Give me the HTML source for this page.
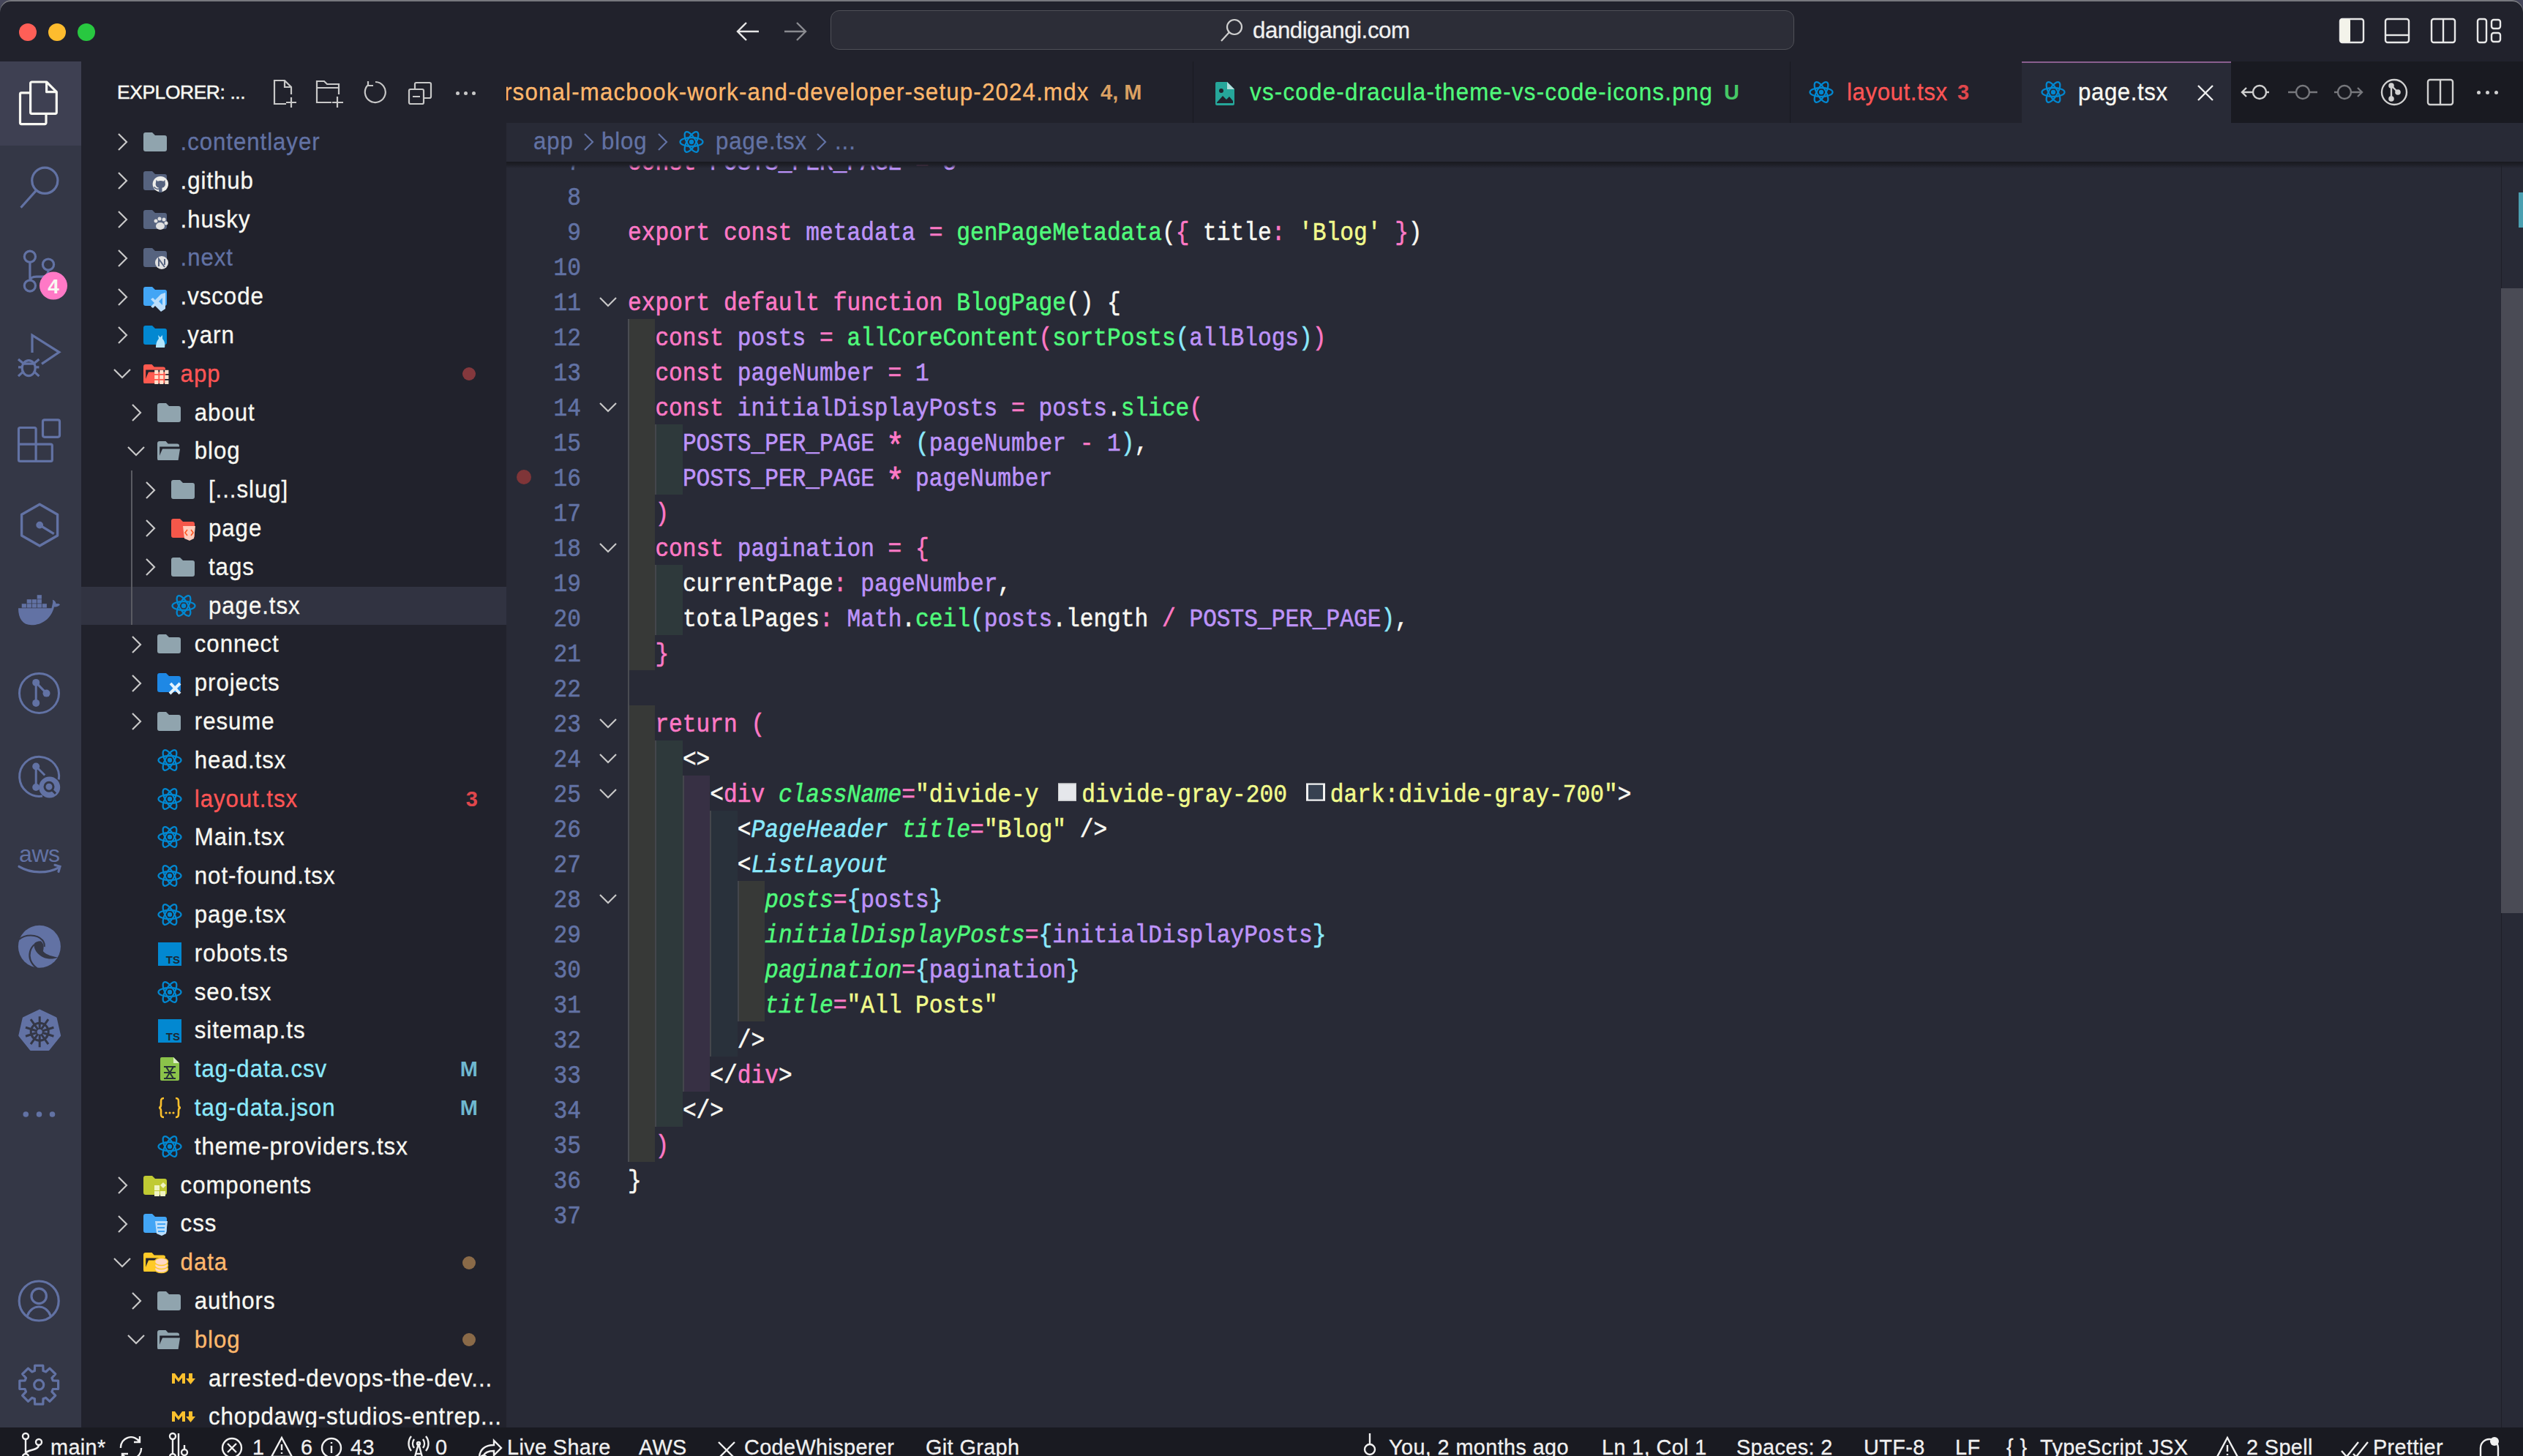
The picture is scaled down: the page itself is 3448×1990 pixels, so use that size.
<!DOCTYPE html>
<html><head><meta charset="utf-8"><style>
html,body{margin:0;padding:0;width:3448px;height:1990px;overflow:hidden;background:#21222c;font-family:"Liberation Sans",sans-serif}
div,span{box-sizing:content-box}
</style></head><body>
<div style="position:absolute;left:0;top:0;width:3448px;height:40px;background:#45465a"></div>
<div id="title" style="position:absolute;left:0;top:0;width:3448px;height:84px;background:#21222c;border-radius:15px 15px 0 0;box-shadow:inset 0 2px 0 #77787e"></div>
<div style="position:absolute;left:26px;top:32px;width:24px;height:24px;border-radius:50%;background:#ff5f57"></div>
<div style="position:absolute;left:66px;top:32px;width:24px;height:24px;border-radius:50%;background:#febc2e"></div>
<div style="position:absolute;left:106px;top:32px;width:24px;height:24px;border-radius:50%;background:#28c840"></div>
<svg style="position:absolute;left:1005px;top:28px" width="36" height="30" viewBox="0 0 36 30"><path d="M32 15H4M15 3L3 15l12 12" fill="none" stroke="#e6e6e6" stroke-width="2.4"/></svg>
<svg style="position:absolute;left:1068px;top:28px" width="36" height="30" viewBox="0 0 36 30"><path d="M4 15h28M21 3l12 12-12 12" fill="none" stroke="#8a8b90" stroke-width="2.4"/></svg>
<div style="position:absolute;left:1135px;top:14px;width:1317px;height:54px;border:1.5px solid #505158;border-radius:12px;background:#2c2d37;box-sizing:border-box"></div>
<svg style="position:absolute;left:1666px;top:24px" width="36" height="36" viewBox="0 0 36 36"><circle cx="21" cy="13" r="10" fill="none" stroke="#cfcfcf" stroke-width="2.2"/><path d="M14 20L3 32" stroke="#cfcfcf" stroke-width="2.2"/></svg>
<div style="position:absolute;left:1712px;top:22px;height:40px;line-height:40px;font-size:31.2px;letter-spacing:-0.4px;color:#f0f0f0;-webkit-text-stroke:0.3px #f0f0f0">dandigangi.com</div>
<svg style="position:absolute;left:3196px;top:24px" width="36" height="36" viewBox="0 0 36 36"><rect x="2" y="2" width="32" height="32" rx="3" fill="none" stroke="#e8e8e8" stroke-width="2.4"/><rect x="2" y="2" width="14" height="32" rx="2" fill="#f3f3ea"/></svg>
<svg style="position:absolute;left:3258px;top:24px" width="36" height="36" viewBox="0 0 36 36"><rect x="2" y="2" width="32" height="32" rx="3" fill="none" stroke="#e8e8e8" stroke-width="2.4"/><path d="M2 24h32" stroke="#e8e8e8" stroke-width="2.4"/></svg>
<svg style="position:absolute;left:3321px;top:24px" width="36" height="36" viewBox="0 0 36 36"><rect x="2" y="2" width="32" height="32" rx="3" fill="none" stroke="#e8e8e8" stroke-width="2.4"/><path d="M18 2v32" stroke="#e8e8e8" stroke-width="2.4"/></svg>
<svg style="position:absolute;left:3384px;top:24px" width="36" height="36" viewBox="0 0 36 36"><rect x="2" y="2" width="12" height="32" rx="3" fill="none" stroke="#e8e8e8" stroke-width="2.4"/><rect x="21" y="3" width="12" height="12" rx="3" fill="none" stroke="#e8e8e8" stroke-width="2.4"/><rect x="21" y="21" width="12" height="12" rx="3" fill="none" stroke="#e8e8e8" stroke-width="2.4"/></svg>
<div style="position:absolute;left:0;top:84px;width:111px;height:1867px;background:#343746"></div>
<div style="position:absolute;left:0;top:84px;width:111px;height:115px;background:#3e4052"></div>
<svg style="position:absolute;left:0;top:0" width="111" height="1990" viewBox="0 0 111 1990"><g transform="translate(0 84.0)" fill="none" stroke="#f8f8f2" stroke-width="3.2" stroke-linejoin="round"><path d="M41.6 42.8H29.3a1.8 1.8 0 0 0-1.8 1.8v39.2a1.8 1.8 0 0 0 1.8 1.8h31.9a1.8 1.8 0 0 0 1.8-1.8V71.3"/><path d="M41.6 29.8a1.8 1.8 0 0 1 1.8-1.8h20.2l13.7 13.7v27.8a1.8 1.8 0 0 1-1.8 1.8H43.4a1.8 1.8 0 0 1-1.8-1.8z"/><path d="M63.6 28v13.7h13.7" /></g><g transform="translate(0 199.2)" fill="none" stroke="#6272a4" stroke-width="3.2"><circle cx="61.3" cy="47.6" r="17.6"/><path d="M49.2 61.4L28.5 84.5"/></g><g transform="translate(0 314.4)" fill="none" stroke="#6272a4" stroke-width="3.2"><circle cx="40.9" cy="36.3" r="7.6"/><circle cx="66" cy="47.2" r="7.6"/><circle cx="40.9" cy="76.2" r="7.6"/><path d="M40.9 43.9v24.7M66 54.8c0 6-3 9-9 9h-7c-6 0-9 2-9 6"/></g><circle cx="73" cy="390.59999999999997" r="19" fill="#ff79c6"/><text x="73" y="400.9" text-anchor="middle" font-family="Liberation Sans" font-weight="bold" font-size="28" fill="#f8f8f2">4</text><g transform="translate(0 429.6)" fill="none" stroke="#6272a4" stroke-width="3.2"><path d="M44 52.5V28.5l36.8 23.3L57 67.7"/><ellipse cx="39.2" cy="73.5" rx="9" ry="10.5"/><path d="M30 67.5h18.4M25 61.3l6 5M25 72.3h5M25 84.5l6-5.5M53.4 61.3l-6 5M53.4 72.3h-5M53.4 84.5l-6-5.5"/></g><g transform="translate(0 544.8)" fill="none" stroke="#6272a4" stroke-width="3.2" stroke-linejoin="round"><rect x="58.5" y="29" width="23" height="23.5" rx="2.5"/><path d="M27.5 39.7h19.6a2 2 0 0 1 2 2v20.6h20.2a2 2 0 0 1 2 2v19.3a2 2 0 0 1-2 2H27.5a2 2 0 0 1-2-2V41.7a2 2 0 0 1 2-2zM25.5 62.3h23.6v23.3"/></g><g transform="translate(0 660.0)" fill="none" stroke="#6272a4" stroke-width="3.4" stroke-linejoin="round"><path d="M54.2 29.2l24.4 14v28.8l-24.4 14-24.6-14V43.2z"/><path d="M54.2 57.6l19.5 12"/><circle cx="54.2" cy="57.6" r="3.2" fill="#6272a4"/></g><g transform="translate(0 775.2)" fill="#6272a4"><path d="M25 56h45.5c1-5 2.5-9 1.2-11.5 3 .8 4.5 3 5 5.5 2-.6 4-.4 5.3 1.2-2 2.5-5 3-8 3C70 70 58 79 43 79 31 79 25 70 25 56z"/><rect x="29.7" y="50" width="6.2" height="5.4"/><rect x="36.7" y="50" width="6.2" height="5.4"/><rect x="43.7" y="50" width="6.2" height="5.4"/><rect x="50.7" y="50" width="6.2" height="5.4"/><rect x="57.7" y="50" width="6.2" height="5.4"/><rect x="36.7" y="44" width="6.2" height="5.4"/><rect x="43.7" y="44" width="6.2" height="5.4"/><rect x="50.7" y="44" width="6.2" height="5.4"/><rect x="50.7" y="38" width="6.2" height="5.4"/></g><g transform="translate(0 890.4)" fill="none" stroke="#6272a4" stroke-width="3"><circle cx="53.5" cy="57" r="27"/><path d="M49.2 42.5v28M49.2 42.5l14.3 14.7"/><g fill="#6272a4" stroke="none"><circle cx="49.2" cy="42.5" r="5"/><circle cx="49.2" cy="70.5" r="5"/><circle cx="63.5" cy="57.2" r="5"/></g></g><g transform="translate(0 1005.6)" fill="none" stroke="#6272a4" stroke-width="3"><path d="M58 82.4A27 27 0 1 1 80.3 60"/><path d="M49.2 41.9v28.5M49.2 41.9l12 12"/><g fill="#6272a4" stroke="none"><circle cx="49.2" cy="41.9" r="5"/><circle cx="49.2" cy="70.4" r="5"/><circle cx="67.7" cy="70.4" r="14.5"/></g><circle cx="67" cy="69.6" r="6" stroke="#343746" stroke-width="3"/><path d="M71 74l5 5" stroke="#343746" stroke-width="3"/></g><text x="53.8" y="1177.8" text-anchor="middle" font-family="Liberation Sans" font-size="32" fill="#6272a4" letter-spacing="-0.5">aws</text><g transform="translate(0 1120.8)" fill="none" stroke="#6272a4" stroke-width="3.2" stroke-linecap="round"><path d="M26 63.5c17 10 39 10 55 1"/><path d="M75 61.5l7 2-2 7"/></g><g transform="translate(0 1236.0)"><circle cx="53.9" cy="57.7" r="29" fill="#6272a4"/><g fill="none" stroke="#343746" stroke-width="2.2"><path d="M26 48C34 41 50 40 58 49c2.5 3 3 6 2.6 9"/><path d="M47 55c-6 5-8 14-5.5 21 2 5 5 8.5 9 11.5"/></g><path d="M55.7 50.3c3.6 2.4 5 7.2 3.2 13.6 2.3 3.5 9 6.5 20 8.6-3.7 1.8-8 2.4-12 2-7-.6-14-4.6-17.6-10.2-2.6-4-3.3-8.3-2.5-10.5 1.5-2.3 5-3.6 8.9-3.5z" fill="#343746"/></g><g transform="translate(0 1351.2)"><path d="M54.2 29.8l22 10.6 5.4 23.8-15.2 19H42l-15.2-19 5.4-23.8z" fill="#6272a4" stroke="#6272a4" stroke-width="3" stroke-linejoin="round"/><g fill="none" stroke="#343746" stroke-width="3"><circle cx="54.2" cy="59" r="12"/><path d="M54.2 38v42M35 53l38.4 12M35 65l38.4-12M42 42l24 34M66 42L42 76"/></g><circle cx="54.2" cy="59" r="3.5" fill="#6272a4"/></g><circle cx="35.3" cy="1523" r="3.8" fill="#6272a4"/><circle cx="53.5" cy="1523" r="3.8" fill="#6272a4"/><circle cx="71.5" cy="1523" r="3.8" fill="#6272a4"/><g fill="none" stroke="#6272a4" stroke-width="3.2"><circle cx="53.2" cy="1778" r="27"/><circle cx="53.2" cy="1771.4" r="10.2"/><path d="M37 1799c3-8 9-13 16.2-13s13.2 5 16.2 13"/></g><g fill="none" stroke="#6272a4" stroke-width="3.2" stroke-linejoin="round"><path d="M47.6 1866.3 L58.8 1866.3 L59.0 1873.6 L62.6 1875.0 L67.9 1870.1 L75.8 1878.0 L70.9 1883.3 L72.3 1886.9 L79.6 1887.1 L79.6 1898.3 L72.3 1898.5 L70.9 1902.1 L75.8 1907.4 L67.9 1915.3 L62.6 1910.4 L59.0 1911.8 L58.8 1919.1 L47.6 1919.1 L47.4 1911.8 L43.8 1910.4 L38.5 1915.3 L30.6 1907.4 L35.5 1902.1 L34.1 1898.5 L26.8 1898.3 L26.8 1887.1 L34.1 1886.9 L35.5 1883.3 L30.6 1878.0 L38.5 1870.1 L43.8 1875.0 L47.4 1873.6Z"/><circle cx="53.2" cy="1892.7" r="6.5"/></g></svg>
<div style="position:absolute;left:111px;top:84px;width:581px;height:1867px;background:#21222c;overflow:hidden" id="sb">
<div style="position:absolute;left:49px;top:22px;height:40px;line-height:40px;font-size:26.4px;letter-spacing:-0.4px;color:#f8f8f2;-webkit-text-stroke:0.5px #f8f8f2">EXPLORER: ...</div>
<svg style="position:absolute;left:260px;top:24px" width="40" height="40" viewBox="0 0 40 40" fill="none" stroke="#c8c8c8" stroke-width="2.2"><path d="M20 34H4V2h14l9 9v10M18 2v9h9M27 25v14M20 32h14"/></svg>
<svg style="position:absolute;left:320px;top:24px" width="40" height="40" viewBox="0 0 40 40" fill="none" stroke="#c8c8c8" stroke-width="2.2"><path d="M22 32H2V3h10l4 4h16v14M2 12h30M30 24v15M23 32h15"/></svg>
<svg style="position:absolute;left:384px;top:24px" width="36" height="38" viewBox="0 0 36 38" fill="none" stroke="#c8c8c8" stroke-width="2.2"><path d="M8 8a14 14 0 1 0 10-4M8 3v6h7"/></svg>
<svg style="position:absolute;left:446px;top:26px" width="36" height="36" viewBox="0 0 36 36" fill="none" stroke="#c8c8c8" stroke-width="2.2"><rect x="2" y="12" width="20" height="20" rx="2"/><path d="M10 12V5a2 2 0 0 1 2-2h18a2 2 0 0 1 2 2v17a2 2 0 0 1-2 2h-8M7 22h10"/></svg>
<div style="position:absolute;left:512px;top:41px;width:5px;height:5px;border-radius:50%;background:#c8c8c8"></div>
<div style="position:absolute;left:523px;top:41px;width:5px;height:5px;border-radius:50%;background:#c8c8c8"></div>
<div style="position:absolute;left:534px;top:41px;width:5px;height:5px;border-radius:50%;background:#c8c8c8"></div>
<svg style="position:absolute;left:49.0px;top:97.4px" width="16" height="26" viewBox="0 0 16 26"><path d="M2 2l11 11L2 24" fill="none" stroke="#c8c8c8" stroke-width="2.2"/></svg>
<div style="position:absolute;left:85.0px;top:96.9px;width:34px;height:34px"><svg width="34" height="28" viewBox="0 0 34 28" style="position:absolute;left:0;top:0;overflow:visible"><path d="M0 3a3 3 0 0 1 3-3h9l4 4h13a3 3 0 0 1 3 3v16a3 3 0 0 1-3 3H3a3 3 0 0 1-3-3z" fill="#90a4ae"/></svg></div>
<div style="position:absolute;left:135.6px;top:84.0px;height:52.8px;line-height:52.8px;font-size:31.2px;letter-spacing:0.95px;color:#6272a4;white-space:nowrap;transform:scaleY(1.07);-webkit-text-stroke:0.3px currentColor">.contentlayer</div>
<svg style="position:absolute;left:49.0px;top:150.20000000000002px" width="16" height="26" viewBox="0 0 16 26"><path d="M2 2l11 11L2 24" fill="none" stroke="#c8c8c8" stroke-width="2.2"/></svg>
<div style="position:absolute;left:85.0px;top:149.7px;width:34px;height:34px"><svg width="34" height="28" viewBox="0 0 34 28" style="position:absolute;left:0;top:0;overflow:visible"><path d="M0 3a3 3 0 0 1 3-3h9l4 4h13a3 3 0 0 1 3 3v16a3 3 0 0 1-3 3H3a3 3 0 0 1-3-3z" fill="#56637f"/><circle cx="23.3" cy="17.6" r="10.7" fill="#eeeeea"/><path d="M17.6 11.8l1.8 1.9q4.1-1.2 8.2 0l1.8-1.9.3 4.3q1.3 5.2-4.2 6.6V29h-4.4v-6.3q-5.5-1.4-4.2-6.6z" fill="#56637f"/><path d="M14.5 21.5q3 4 6.8 2.6" stroke="#56637f" stroke-width="1.6" fill="none"/></svg></div>
<div style="position:absolute;left:135.6px;top:136.8px;height:52.8px;line-height:52.8px;font-size:31.2px;letter-spacing:0.95px;color:#f8f8f2;white-space:nowrap;transform:scaleY(1.07);-webkit-text-stroke:0.3px currentColor">.github</div>
<svg style="position:absolute;left:49.0px;top:203.0px" width="16" height="26" viewBox="0 0 16 26"><path d="M2 2l11 11L2 24" fill="none" stroke="#c8c8c8" stroke-width="2.2"/></svg>
<div style="position:absolute;left:85.0px;top:202.5px;width:34px;height:34px"><svg width="34" height="28" viewBox="0 0 34 28" style="position:absolute;left:0;top:0;overflow:visible"><path d="M0 3a3 3 0 0 1 3-3h9l4 4h13a3 3 0 0 1 3 3v16a3 3 0 0 1-3 3H3a3 3 0 0 1-3-3z" fill="#56637f"/><g fill="#e0e0e0"><ellipse cx="23" cy="22" rx="6" ry="5"/><circle cx="17" cy="15" r="2.5"/><circle cx="22" cy="12" r="2.5"/><circle cx="28" cy="13" r="2.5"/><circle cx="31" cy="18" r="2.5"/></g></svg></div>
<div style="position:absolute;left:135.6px;top:189.6px;height:52.8px;line-height:52.8px;font-size:31.2px;letter-spacing:0.95px;color:#f8f8f2;white-space:nowrap;transform:scaleY(1.07);-webkit-text-stroke:0.3px currentColor">.husky</div>
<svg style="position:absolute;left:49.0px;top:255.79999999999995px" width="16" height="26" viewBox="0 0 16 26"><path d="M2 2l11 11L2 24" fill="none" stroke="#c8c8c8" stroke-width="2.2"/></svg>
<div style="position:absolute;left:85.0px;top:255.3px;width:34px;height:34px"><svg width="34" height="28" viewBox="0 0 34 28" style="position:absolute;left:0;top:0;overflow:visible"><path d="M0 3a3 3 0 0 1 3-3h9l4 4h13a3 3 0 0 1 3 3v16a3 3 0 0 1-3 3H3a3 3 0 0 1-3-3z" fill="#56637f"/><circle cx="25" cy="20" r="9" fill="#e0e0e0"/><path d="M21 25V15l8 11M29 15v8" stroke="#56637f" stroke-width="2" fill="none"/></svg></div>
<div style="position:absolute;left:135.6px;top:242.4px;height:52.8px;line-height:52.8px;font-size:31.2px;letter-spacing:0.95px;color:#6272a4;white-space:nowrap;transform:scaleY(1.07);-webkit-text-stroke:0.3px currentColor">.next</div>
<svg style="position:absolute;left:49.0px;top:308.59999999999997px" width="16" height="26" viewBox="0 0 16 26"><path d="M2 2l11 11L2 24" fill="none" stroke="#c8c8c8" stroke-width="2.2"/></svg>
<div style="position:absolute;left:85.0px;top:308.1px;width:34px;height:34px"><svg width="34" height="28" viewBox="0 0 34 28" style="position:absolute;left:0;top:0;overflow:visible"><path d="M0 3a3 3 0 0 1 3-3h9l4 4h13a3 3 0 0 1 3 3v16a3 3 0 0 1-3 3H3a3 3 0 0 1-3-3z" fill="#42a5f5"/><path d="M30 8v22l-6 4-8-8-3 3-3-2 5-5-5-5 3-2 3 3 8-8z" fill="#bbdefb"/><path d="M26 15v10l-5-5z" fill="#42a5f5"/></svg></div>
<div style="position:absolute;left:135.6px;top:295.2px;height:52.8px;line-height:52.8px;font-size:31.2px;letter-spacing:0.95px;color:#f8f8f2;white-space:nowrap;transform:scaleY(1.07);-webkit-text-stroke:0.3px currentColor">.vscode</div>
<svg style="position:absolute;left:49.0px;top:361.4px" width="16" height="26" viewBox="0 0 16 26"><path d="M2 2l11 11L2 24" fill="none" stroke="#c8c8c8" stroke-width="2.2"/></svg>
<div style="position:absolute;left:85.0px;top:360.9px;width:34px;height:34px"><svg width="34" height="28" viewBox="0 0 34 28" style="position:absolute;left:0;top:0;overflow:visible"><path d="M0 3a3 3 0 0 1 3-3h9l4 4h13a3 3 0 0 1 3 3v16a3 3 0 0 1-3 3H3a3 3 0 0 1-3-3z" fill="#0288d1"/><path d="M17 30c0-6 2-10 4-12l-1-5 3 3 3-3v5c3 3 4 8 3 12h4z" fill="#b3e5fc"/></svg></div>
<div style="position:absolute;left:135.6px;top:348.0px;height:52.8px;line-height:52.8px;font-size:31.2px;letter-spacing:0.95px;color:#f8f8f2;white-space:nowrap;transform:scaleY(1.07);-webkit-text-stroke:0.3px currentColor">.yarn</div>
<svg style="position:absolute;left:43.0px;top:419.19999999999993px" width="26" height="16" viewBox="0 0 26 16"><path d="M2 2l11 11L24 2" fill="none" stroke="#c8c8c8" stroke-width="2.2"/></svg>
<div style="position:absolute;left:85.0px;top:413.7px;width:34px;height:34px"><svg width="34" height="28" viewBox="0 0 34 28" style="position:absolute;left:0;top:0;overflow:visible"><path d="M0 3a3 3 0 0 1 3-3h8.5l3.2 3.4H27a3 3 0 0 1 3 3v1.1H3.2V26H2.5A2.5 2.5 0 0 1 0 23.5z" fill="#ff5a4f"/><path d="M7 10.5h24L28.6 26H0.4z" fill="#ff5a4f"/><rect x="13.8" y="6.4" width="22" height="22" fill="#21222c" opacity="0.0"/><g fill="#ffe0cc"><rect x="15.2" y="7.8" width="5.2" height="5.2"/><rect x="22.2" y="7.8" width="5.2" height="5.2"/><rect x="29.2" y="7.8" width="5.2" height="5.2"/><rect x="15.2" y="14.8" width="5.2" height="5.2"/><rect x="22.2" y="14.8" width="5.2" height="5.2"/><rect x="29.2" y="14.8" width="5.2" height="5.2"/><rect x="15.2" y="21.8" width="5.2" height="5.2"/><rect x="22.2" y="21.8" width="5.2" height="5.2"/><rect x="29.2" y="21.8" width="5.2" height="5.2"/></g></svg></div>
<div style="position:absolute;left:135.6px;top:400.8px;height:52.8px;line-height:52.8px;font-size:31.2px;letter-spacing:0.95px;color:#ff5555;white-space:nowrap;transform:scaleY(1.07);-webkit-text-stroke:0.3px currentColor">app</div>
<div style="position:absolute;left:521px;top:418.2px;width:18px;height:18px;border-radius:50%;background:#84383d"></div>
<svg style="position:absolute;left:68.19999999999999px;top:466.99999999999994px" width="16" height="26" viewBox="0 0 16 26"><path d="M2 2l11 11L2 24" fill="none" stroke="#c8c8c8" stroke-width="2.2"/></svg>
<div style="position:absolute;left:104.2px;top:466.5px;width:34px;height:34px"><svg width="34" height="28" viewBox="0 0 34 28" style="position:absolute;left:0;top:0;overflow:visible"><path d="M0 3a3 3 0 0 1 3-3h9l4 4h13a3 3 0 0 1 3 3v16a3 3 0 0 1-3 3H3a3 3 0 0 1-3-3z" fill="#90a4ae"/></svg></div>
<div style="position:absolute;left:154.8px;top:453.6px;height:52.8px;line-height:52.8px;font-size:31.2px;letter-spacing:0.95px;color:#f8f8f2;white-space:nowrap;transform:scaleY(1.07);-webkit-text-stroke:0.3px currentColor">about</div>
<svg style="position:absolute;left:62.19999999999999px;top:524.8px" width="26" height="16" viewBox="0 0 26 16"><path d="M2 2l11 11L24 2" fill="none" stroke="#c8c8c8" stroke-width="2.2"/></svg>
<div style="position:absolute;left:104.2px;top:519.3px;width:34px;height:34px"><svg width="34" height="28" viewBox="0 0 34 28" style="position:absolute;left:0;top:0;overflow:visible"><path d="M0 3a3 3 0 0 1 3-3h8.5l3.2 3.4H27a3 3 0 0 1 3 3v1.1H3.2V26H2.5A2.5 2.5 0 0 1 0 23.5z" fill="#90a4ae"/><path d="M7 10.5h24L28.6 26H0.4z" fill="#90a4ae"/></svg></div>
<div style="position:absolute;left:154.8px;top:506.4px;height:52.8px;line-height:52.8px;font-size:31.2px;letter-spacing:0.95px;color:#f8f8f2;white-space:nowrap;transform:scaleY(1.07);-webkit-text-stroke:0.3px currentColor">blog</div>
<svg style="position:absolute;left:87.4px;top:572.6px" width="16" height="26" viewBox="0 0 16 26"><path d="M2 2l11 11L2 24" fill="none" stroke="#c8c8c8" stroke-width="2.2"/></svg>
<div style="position:absolute;left:123.4px;top:572.1px;width:34px;height:34px"><svg width="34" height="28" viewBox="0 0 34 28" style="position:absolute;left:0;top:0;overflow:visible"><path d="M0 3a3 3 0 0 1 3-3h9l4 4h13a3 3 0 0 1 3 3v16a3 3 0 0 1-3 3H3a3 3 0 0 1-3-3z" fill="#90a4ae"/></svg></div>
<div style="position:absolute;left:174.0px;top:559.2px;height:52.8px;line-height:52.8px;font-size:31.2px;letter-spacing:0.95px;color:#f8f8f2;white-space:nowrap;transform:scaleY(1.07);-webkit-text-stroke:0.3px currentColor">[...slug]</div>
<svg style="position:absolute;left:87.4px;top:625.4px" width="16" height="26" viewBox="0 0 16 26"><path d="M2 2l11 11L2 24" fill="none" stroke="#c8c8c8" stroke-width="2.2"/></svg>
<div style="position:absolute;left:123.4px;top:624.9px;width:34px;height:34px"><svg width="34" height="28" viewBox="0 0 34 28" style="position:absolute;left:0;top:0;overflow:visible"><path d="M0 3a3 3 0 0 1 3-3h9l4 4h13a3 3 0 0 1 3 3v16a3 3 0 0 1-3 3H3a3 3 0 0 1-3-3z" fill="#f4574a"/><path d="M16 10h17l-2 17-6 3-7-3z" fill="#ffccbc"/><path d="M22 15l-3 4 3 4M27 15l3 4-3 4" stroke="#ff5722" stroke-width="1.6" fill="none"/></svg></div>
<div style="position:absolute;left:174.0px;top:612.0px;height:52.8px;line-height:52.8px;font-size:31.2px;letter-spacing:0.95px;color:#f8f8f2;white-space:nowrap;transform:scaleY(1.07);-webkit-text-stroke:0.3px currentColor">page</div>
<svg style="position:absolute;left:87.4px;top:678.1999999999999px" width="16" height="26" viewBox="0 0 16 26"><path d="M2 2l11 11L2 24" fill="none" stroke="#c8c8c8" stroke-width="2.2"/></svg>
<div style="position:absolute;left:123.4px;top:677.7px;width:34px;height:34px"><svg width="34" height="28" viewBox="0 0 34 28" style="position:absolute;left:0;top:0;overflow:visible"><path d="M0 3a3 3 0 0 1 3-3h9l4 4h13a3 3 0 0 1 3 3v16a3 3 0 0 1-3 3H3a3 3 0 0 1-3-3z" fill="#90a4ae"/></svg></div>
<div style="position:absolute;left:174.0px;top:664.8px;height:52.8px;line-height:52.8px;font-size:31.2px;letter-spacing:0.95px;color:#f8f8f2;white-space:nowrap;transform:scaleY(1.07);-webkit-text-stroke:0.3px currentColor">tags</div>
<div style="position:absolute;left:0;top:717.6px;width:581px;height:52.8px;background:#313341"></div>
<div style="position:absolute;left:123.4px;top:726.5px;width:34px;height:34px"><svg width="34" height="34" viewBox="0 0 34 34" style="position:absolute;left:0;top:0"><g fill="none" stroke="#0288d1" stroke-width="2.3"><ellipse cx="17" cy="17" rx="15.5" ry="6"/><ellipse cx="17" cy="17" rx="15.5" ry="6" transform="rotate(60 17 17)"/><ellipse cx="17" cy="17" rx="15.5" ry="6" transform="rotate(120 17 17)"/></g><circle cx="17" cy="17" r="3.2" fill="#0288d1"/></svg></div>
<div style="position:absolute;left:174.0px;top:717.6px;height:52.8px;line-height:52.8px;font-size:31.2px;letter-spacing:0.95px;color:#f8f8f2;white-space:nowrap;transform:scaleY(1.07);-webkit-text-stroke:0.3px currentColor">page.tsx</div>
<svg style="position:absolute;left:68.19999999999999px;top:783.8px" width="16" height="26" viewBox="0 0 16 26"><path d="M2 2l11 11L2 24" fill="none" stroke="#c8c8c8" stroke-width="2.2"/></svg>
<div style="position:absolute;left:104.2px;top:783.3px;width:34px;height:34px"><svg width="34" height="28" viewBox="0 0 34 28" style="position:absolute;left:0;top:0;overflow:visible"><path d="M0 3a3 3 0 0 1 3-3h9l4 4h13a3 3 0 0 1 3 3v16a3 3 0 0 1-3 3H3a3 3 0 0 1-3-3z" fill="#90a4ae"/></svg></div>
<div style="position:absolute;left:154.8px;top:770.4px;height:52.8px;line-height:52.8px;font-size:31.2px;letter-spacing:0.95px;color:#f8f8f2;white-space:nowrap;transform:scaleY(1.07);-webkit-text-stroke:0.3px currentColor">connect</div>
<svg style="position:absolute;left:68.19999999999999px;top:836.5999999999999px" width="16" height="26" viewBox="0 0 16 26"><path d="M2 2l11 11L2 24" fill="none" stroke="#c8c8c8" stroke-width="2.2"/></svg>
<div style="position:absolute;left:104.2px;top:836.1px;width:34px;height:34px"><svg width="34" height="28" viewBox="0 0 34 28" style="position:absolute;left:0;top:0;overflow:visible"><path d="M0 3a3 3 0 0 1 3-3h9l4 4h13a3 3 0 0 1 3 3v16a3 3 0 0 1-3 3H3a3 3 0 0 1-3-3z" fill="#1e88e5"/><path d="M17 28l14-14M18 14l13 14" stroke="#e3f2fd" stroke-width="4"/></svg></div>
<div style="position:absolute;left:154.8px;top:823.2px;height:52.8px;line-height:52.8px;font-size:31.2px;letter-spacing:0.95px;color:#f8f8f2;white-space:nowrap;transform:scaleY(1.07);-webkit-text-stroke:0.3px currentColor">projects</div>
<svg style="position:absolute;left:68.19999999999999px;top:889.4px" width="16" height="26" viewBox="0 0 16 26"><path d="M2 2l11 11L2 24" fill="none" stroke="#c8c8c8" stroke-width="2.2"/></svg>
<div style="position:absolute;left:104.2px;top:888.9px;width:34px;height:34px"><svg width="34" height="28" viewBox="0 0 34 28" style="position:absolute;left:0;top:0;overflow:visible"><path d="M0 3a3 3 0 0 1 3-3h9l4 4h13a3 3 0 0 1 3 3v16a3 3 0 0 1-3 3H3a3 3 0 0 1-3-3z" fill="#90a4ae"/></svg></div>
<div style="position:absolute;left:154.8px;top:876.0px;height:52.8px;line-height:52.8px;font-size:31.2px;letter-spacing:0.95px;color:#f8f8f2;white-space:nowrap;transform:scaleY(1.07);-webkit-text-stroke:0.3px currentColor">resume</div>
<div style="position:absolute;left:104.2px;top:937.7px;width:34px;height:34px"><svg width="34" height="34" viewBox="0 0 34 34" style="position:absolute;left:0;top:0"><g fill="none" stroke="#0288d1" stroke-width="2.3"><ellipse cx="17" cy="17" rx="15.5" ry="6"/><ellipse cx="17" cy="17" rx="15.5" ry="6" transform="rotate(60 17 17)"/><ellipse cx="17" cy="17" rx="15.5" ry="6" transform="rotate(120 17 17)"/></g><circle cx="17" cy="17" r="3.2" fill="#0288d1"/></svg></div>
<div style="position:absolute;left:154.8px;top:928.8px;height:52.8px;line-height:52.8px;font-size:31.2px;letter-spacing:0.95px;color:#f8f8f2;white-space:nowrap;transform:scaleY(1.07);-webkit-text-stroke:0.3px currentColor">head.tsx</div>
<div style="position:absolute;left:104.2px;top:990.5px;width:34px;height:34px"><svg width="34" height="34" viewBox="0 0 34 34" style="position:absolute;left:0;top:0"><g fill="none" stroke="#0288d1" stroke-width="2.3"><ellipse cx="17" cy="17" rx="15.5" ry="6"/><ellipse cx="17" cy="17" rx="15.5" ry="6" transform="rotate(60 17 17)"/><ellipse cx="17" cy="17" rx="15.5" ry="6" transform="rotate(120 17 17)"/></g><circle cx="17" cy="17" r="3.2" fill="#0288d1"/></svg></div>
<div style="position:absolute;left:154.8px;top:981.6px;height:52.8px;line-height:52.8px;font-size:31.2px;letter-spacing:0.95px;color:#ff5555;white-space:nowrap;transform:scaleY(1.07);-webkit-text-stroke:0.3px currentColor">layout.tsx</div>
<div style="position:absolute;left:489px;width:53px;text-align:right;top:981.6px;height:52.8px;line-height:52.8px;font-size:29px;font-weight:bold;color:#e0474c">3</div>
<div style="position:absolute;left:104.2px;top:1043.3px;width:34px;height:34px"><svg width="34" height="34" viewBox="0 0 34 34" style="position:absolute;left:0;top:0"><g fill="none" stroke="#0288d1" stroke-width="2.3"><ellipse cx="17" cy="17" rx="15.5" ry="6"/><ellipse cx="17" cy="17" rx="15.5" ry="6" transform="rotate(60 17 17)"/><ellipse cx="17" cy="17" rx="15.5" ry="6" transform="rotate(120 17 17)"/></g><circle cx="17" cy="17" r="3.2" fill="#0288d1"/></svg></div>
<div style="position:absolute;left:154.8px;top:1034.4px;height:52.8px;line-height:52.8px;font-size:31.2px;letter-spacing:0.95px;color:#f8f8f2;white-space:nowrap;transform:scaleY(1.07);-webkit-text-stroke:0.3px currentColor">Main.tsx</div>
<div style="position:absolute;left:104.2px;top:1096.1px;width:34px;height:34px"><svg width="34" height="34" viewBox="0 0 34 34" style="position:absolute;left:0;top:0"><g fill="none" stroke="#0288d1" stroke-width="2.3"><ellipse cx="17" cy="17" rx="15.5" ry="6"/><ellipse cx="17" cy="17" rx="15.5" ry="6" transform="rotate(60 17 17)"/><ellipse cx="17" cy="17" rx="15.5" ry="6" transform="rotate(120 17 17)"/></g><circle cx="17" cy="17" r="3.2" fill="#0288d1"/></svg></div>
<div style="position:absolute;left:154.8px;top:1087.2px;height:52.8px;line-height:52.8px;font-size:31.2px;letter-spacing:0.95px;color:#f8f8f2;white-space:nowrap;transform:scaleY(1.07);-webkit-text-stroke:0.3px currentColor">not-found.tsx</div>
<div style="position:absolute;left:104.2px;top:1148.9px;width:34px;height:34px"><svg width="34" height="34" viewBox="0 0 34 34" style="position:absolute;left:0;top:0"><g fill="none" stroke="#0288d1" stroke-width="2.3"><ellipse cx="17" cy="17" rx="15.5" ry="6"/><ellipse cx="17" cy="17" rx="15.5" ry="6" transform="rotate(60 17 17)"/><ellipse cx="17" cy="17" rx="15.5" ry="6" transform="rotate(120 17 17)"/></g><circle cx="17" cy="17" r="3.2" fill="#0288d1"/></svg></div>
<div style="position:absolute;left:154.8px;top:1140.0px;height:52.8px;line-height:52.8px;font-size:31.2px;letter-spacing:0.95px;color:#f8f8f2;white-space:nowrap;transform:scaleY(1.07);-webkit-text-stroke:0.3px currentColor">page.tsx</div>
<div style="position:absolute;left:104.2px;top:1201.7px;width:34px;height:34px"><svg width="34" height="34" viewBox="0 0 34 34" style="position:absolute;left:0;top:0"><rect x="1" y="2" width="32" height="32" fill="#0288d1"/><text x="31" y="31" text-anchor="end" font-family="Liberation Sans" font-weight="bold" font-size="15" fill="#1c2833">TS</text></svg></div>
<div style="position:absolute;left:154.8px;top:1192.8px;height:52.8px;line-height:52.8px;font-size:31.2px;letter-spacing:0.95px;color:#f8f8f2;white-space:nowrap;transform:scaleY(1.07);-webkit-text-stroke:0.3px currentColor">robots.ts</div>
<div style="position:absolute;left:104.2px;top:1254.5px;width:34px;height:34px"><svg width="34" height="34" viewBox="0 0 34 34" style="position:absolute;left:0;top:0"><g fill="none" stroke="#0288d1" stroke-width="2.3"><ellipse cx="17" cy="17" rx="15.5" ry="6"/><ellipse cx="17" cy="17" rx="15.5" ry="6" transform="rotate(60 17 17)"/><ellipse cx="17" cy="17" rx="15.5" ry="6" transform="rotate(120 17 17)"/></g><circle cx="17" cy="17" r="3.2" fill="#0288d1"/></svg></div>
<div style="position:absolute;left:154.8px;top:1245.6px;height:52.8px;line-height:52.8px;font-size:31.2px;letter-spacing:0.95px;color:#f8f8f2;white-space:nowrap;transform:scaleY(1.07);-webkit-text-stroke:0.3px currentColor">seo.tsx</div>
<div style="position:absolute;left:104.2px;top:1307.3px;width:34px;height:34px"><svg width="34" height="34" viewBox="0 0 34 34" style="position:absolute;left:0;top:0"><rect x="1" y="2" width="32" height="32" fill="#0288d1"/><text x="31" y="31" text-anchor="end" font-family="Liberation Sans" font-weight="bold" font-size="15" fill="#1c2833">TS</text></svg></div>
<div style="position:absolute;left:154.8px;top:1298.4px;height:52.8px;line-height:52.8px;font-size:31.2px;letter-spacing:0.95px;color:#f8f8f2;white-space:nowrap;transform:scaleY(1.07);-webkit-text-stroke:0.3px currentColor">sitemap.ts</div>
<div style="position:absolute;left:104.2px;top:1360.1px;width:34px;height:34px"><svg width="34" height="34" viewBox="0 0 34 34" style="position:absolute;left:0;top:0"><path d="M4 3a2 2 0 0 1 2-2h16l8 8v22a2 2 0 0 1-2 2H6a2 2 0 0 1-2-2z" fill="#8bc34a"/><path d="M22 1v8h8" fill="#dcedc8"/><path d="M9 14h16M9 22h16M9 30h16M12 14l10 16M22 14L12 30" stroke="#263238" stroke-width="2"/></svg></div>
<div style="position:absolute;left:154.8px;top:1351.2px;height:52.8px;line-height:52.8px;font-size:31.2px;letter-spacing:0.95px;color:#8be9fd;white-space:nowrap;transform:scaleY(1.07);-webkit-text-stroke:0.3px currentColor">tag-data.csv</div>
<div style="position:absolute;left:489px;width:53px;text-align:right;top:1351.2px;height:52.8px;line-height:52.8px;font-size:29px;font-weight:bold;color:#6fb8d0">M</div>
<div style="position:absolute;left:104.2px;top:1412.9px;width:34px;height:34px"><svg width="34" height="34" viewBox="0 0 34 34" style="position:absolute;left:0;top:0"><path d="M9 4c-4 0-4 2-4 6v3c0 2-1 4-3 4 2 0 3 2 3 4v3c0 4 0 6 4 6M25 4c4 0 4 2 4 6v3c0 2 1 4 3 4-2 0-3 2-3 4v3c0 4 0 6-4 6" fill="none" stroke="#fbc02d" stroke-width="2.6"/><circle cx="12" cy="24" r="1.6" fill="#fbc02d"/><circle cx="17" cy="24" r="1.6" fill="#fbc02d"/><circle cx="22" cy="24" r="1.6" fill="#fbc02d"/></svg></div>
<div style="position:absolute;left:154.8px;top:1404.0px;height:52.8px;line-height:52.8px;font-size:31.2px;letter-spacing:0.95px;color:#8be9fd;white-space:nowrap;transform:scaleY(1.07);-webkit-text-stroke:0.3px currentColor">tag-data.json</div>
<div style="position:absolute;left:489px;width:53px;text-align:right;top:1404.0px;height:52.8px;line-height:52.8px;font-size:29px;font-weight:bold;color:#6fb8d0">M</div>
<div style="position:absolute;left:104.2px;top:1465.7px;width:34px;height:34px"><svg width="34" height="34" viewBox="0 0 34 34" style="position:absolute;left:0;top:0"><g fill="none" stroke="#0288d1" stroke-width="2.3"><ellipse cx="17" cy="17" rx="15.5" ry="6"/><ellipse cx="17" cy="17" rx="15.5" ry="6" transform="rotate(60 17 17)"/><ellipse cx="17" cy="17" rx="15.5" ry="6" transform="rotate(120 17 17)"/></g><circle cx="17" cy="17" r="3.2" fill="#0288d1"/></svg></div>
<div style="position:absolute;left:154.8px;top:1456.8px;height:52.8px;line-height:52.8px;font-size:31.2px;letter-spacing:0.95px;color:#f8f8f2;white-space:nowrap;transform:scaleY(1.07);-webkit-text-stroke:0.3px currentColor">theme-providers.tsx</div>
<svg style="position:absolute;left:49.0px;top:1523.0px" width="16" height="26" viewBox="0 0 16 26"><path d="M2 2l11 11L2 24" fill="none" stroke="#c8c8c8" stroke-width="2.2"/></svg>
<div style="position:absolute;left:85.0px;top:1522.5px;width:34px;height:34px"><svg width="34" height="28" viewBox="0 0 34 28" style="position:absolute;left:0;top:0;overflow:visible"><path d="M0 3a3 3 0 0 1 3-3h9l4 4h13a3 3 0 0 1 3 3v16a3 3 0 0 1-3 3H3a3 3 0 0 1-3-3z" fill="#c0ca33"/><g fill="#f0f4c3"><rect x="15" y="13" width="7" height="7"/><rect x="15" y="21" width="7" height="7"/><rect x="23" y="21" width="7" height="7"/><path d="M27 9l4 4-4 4-4-4z"/></g></svg></div>
<div style="position:absolute;left:135.6px;top:1509.6px;height:52.8px;line-height:52.8px;font-size:31.2px;letter-spacing:0.95px;color:#f8f8f2;white-space:nowrap;transform:scaleY(1.07);-webkit-text-stroke:0.3px currentColor">components</div>
<svg style="position:absolute;left:49.0px;top:1575.8px" width="16" height="26" viewBox="0 0 16 26"><path d="M2 2l11 11L2 24" fill="none" stroke="#c8c8c8" stroke-width="2.2"/></svg>
<div style="position:absolute;left:85.0px;top:1575.3px;width:34px;height:34px"><svg width="34" height="28" viewBox="0 0 34 28" style="position:absolute;left:0;top:0;overflow:visible"><path d="M0 3a3 3 0 0 1 3-3h9l4 4h13a3 3 0 0 1 3 3v16a3 3 0 0 1-3 3H3a3 3 0 0 1-3-3z" fill="#42a5f5"/><path d="M16 10h17l-2 17-6 3-7-3z" fill="#bbdefb"/><path d="M19 14h11M19 19h10M20 24h9" stroke="#42a5f5" stroke-width="2"/></svg></div>
<div style="position:absolute;left:135.6px;top:1562.4px;height:52.8px;line-height:52.8px;font-size:31.2px;letter-spacing:0.95px;color:#f8f8f2;white-space:nowrap;transform:scaleY(1.07);-webkit-text-stroke:0.3px currentColor">css</div>
<svg style="position:absolute;left:43.0px;top:1633.6px" width="26" height="16" viewBox="0 0 26 16"><path d="M2 2l11 11L24 2" fill="none" stroke="#c8c8c8" stroke-width="2.2"/></svg>
<div style="position:absolute;left:85.0px;top:1628.1px;width:34px;height:34px"><svg width="34" height="28" viewBox="0 0 34 28" style="position:absolute;left:0;top:0;overflow:visible"><path d="M0 3a3 3 0 0 1 3-3h8.5l3.2 3.4H27a3 3 0 0 1 3 3v1.1H3.2V26H2.5A2.5 2.5 0 0 1 0 23.5z" fill="#ffca28"/><path d="M7 10.5h24L28.6 26H0.4z" fill="#ffca28"/><g fill="#ffd8c4" stroke="#ffca28" stroke-width="1.4"><ellipse cx="24.5" cy="22.5" rx="9" ry="5"/><ellipse cx="24.5" cy="17.5" rx="9" ry="5"/><ellipse cx="24.5" cy="12.5" rx="9" ry="5"/></g></svg></div>
<div style="position:absolute;left:135.6px;top:1615.2px;height:52.8px;line-height:52.8px;font-size:31.2px;letter-spacing:0.95px;color:#ffb86c;white-space:nowrap;transform:scaleY(1.07);-webkit-text-stroke:0.3px currentColor">data</div>
<div style="position:absolute;left:521px;top:1632.6px;width:18px;height:18px;border-radius:50%;background:#8a6a48"></div>
<svg style="position:absolute;left:68.19999999999999px;top:1681.4px" width="16" height="26" viewBox="0 0 16 26"><path d="M2 2l11 11L2 24" fill="none" stroke="#c8c8c8" stroke-width="2.2"/></svg>
<div style="position:absolute;left:104.2px;top:1680.9px;width:34px;height:34px"><svg width="34" height="28" viewBox="0 0 34 28" style="position:absolute;left:0;top:0;overflow:visible"><path d="M0 3a3 3 0 0 1 3-3h9l4 4h13a3 3 0 0 1 3 3v16a3 3 0 0 1-3 3H3a3 3 0 0 1-3-3z" fill="#90a4ae"/></svg></div>
<div style="position:absolute;left:154.8px;top:1668.0px;height:52.8px;line-height:52.8px;font-size:31.2px;letter-spacing:0.95px;color:#f8f8f2;white-space:nowrap;transform:scaleY(1.07);-webkit-text-stroke:0.3px currentColor">authors</div>
<svg style="position:absolute;left:62.19999999999999px;top:1739.2px" width="26" height="16" viewBox="0 0 26 16"><path d="M2 2l11 11L24 2" fill="none" stroke="#c8c8c8" stroke-width="2.2"/></svg>
<div style="position:absolute;left:104.2px;top:1733.7px;width:34px;height:34px"><svg width="34" height="28" viewBox="0 0 34 28" style="position:absolute;left:0;top:0;overflow:visible"><path d="M0 3a3 3 0 0 1 3-3h8.5l3.2 3.4H27a3 3 0 0 1 3 3v1.1H3.2V26H2.5A2.5 2.5 0 0 1 0 23.5z" fill="#90a4ae"/><path d="M7 10.5h24L28.6 26H0.4z" fill="#90a4ae"/></svg></div>
<div style="position:absolute;left:154.8px;top:1720.8px;height:52.8px;line-height:52.8px;font-size:31.2px;letter-spacing:0.95px;color:#ffb86c;white-space:nowrap;transform:scaleY(1.07);-webkit-text-stroke:0.3px currentColor">blog</div>
<div style="position:absolute;left:521px;top:1738.2px;width:18px;height:18px;border-radius:50%;background:#8a6a48"></div>
<div style="position:absolute;left:123.4px;top:1782.5px;width:34px;height:34px"><svg width="34" height="34" viewBox="0 0 34 34" style="position:absolute;left:0;top:0"><path d="M1 24V10h4l5 7 5-7h4v14h-4v-8l-5 6-5-6v8z" fill="#fbc02d"/><path d="M24 10h5v7h4l-6.5 8L20 17h4z" fill="#fbc02d"/></svg></div>
<div style="position:absolute;left:174.0px;top:1773.6px;height:52.8px;line-height:52.8px;font-size:31.2px;letter-spacing:0.95px;color:#f8f8f2;white-space:nowrap;transform:scaleY(1.07);-webkit-text-stroke:0.3px currentColor">arrested-devops-the-dev...</div>
<div style="position:absolute;left:123.4px;top:1835.3px;width:34px;height:34px"><svg width="34" height="34" viewBox="0 0 34 34" style="position:absolute;left:0;top:0"><path d="M1 24V10h4l5 7 5-7h4v14h-4v-8l-5 6-5-6v8z" fill="#fbc02d"/><path d="M24 10h5v7h4l-6.5 8L20 17h4z" fill="#fbc02d"/></svg></div>
<div style="position:absolute;left:174.0px;top:1826.4px;height:52.8px;line-height:52.8px;font-size:31.2px;letter-spacing:0.95px;color:#f8f8f2;white-space:nowrap;transform:scaleY(1.07);-webkit-text-stroke:0.3px currentColor">chopdawg-studios-entrep...</div>
<div style="position:absolute;left:68px;top:559.2px;width:2px;height:211.2px;background:#5a5b62"></div>
</div>
<div style="position:absolute;left:692px;top:84px;width:2756px;height:84px;background:#191a21;overflow:hidden">
<div style="position:absolute;left:0px;top:0;width:938px;height:84px;background:#21222c"></div>
<div style="position:absolute;left:939px;top:0;width:815px;height:84px;background:#21222c"></div>
<div style="position:absolute;left:1755px;top:0;width:316px;height:84px;background:#21222c"></div>
<div style="position:absolute;left:2071px;top:0;width:286px;height:84px;background:#282a36"></div>
<div style="position:absolute;left:2071px;top:0;width:286px;height:2px;background:#8a5f8f"></div>
<div style="position:absolute;left:938px;top:0;width:1px;height:84px;background:#191a21"></div>
<div style="position:absolute;left:1754px;top:0;width:1px;height:84px;background:#191a21"></div>
<div style="position:absolute;left:-3px;top:0;height:84px;line-height:84px;font-size:31.2px;letter-spacing:0.6px;color:#ffb86c;white-space:nowrap;transform:scaleY(1.07);-webkit-text-stroke:0.3px currentColor;letter-spacing:1.2px">rsonal-macbook-work-and-developer-setup-2024.mdx</div>
<div style="position:absolute;left:812px;top:0;height:84px;line-height:84px;font-size:29px;font-weight:bold;color:#d9a062">4, M</div>
<svg style="position:absolute;left:968px;top:27px" width="28" height="34" viewBox="0 0 28 34"><path d="M1 3a2 2 0 0 1 2-2h14l10 10v20a2 2 0 0 1-2 2H3a2 2 0 0 1-2-2z" fill="#26a69a"/><path d="M17 1v10h10" fill="#b2dfdb"/><circle cx="9" cy="13" r="3" fill="#21222c"/><path d="M3 29l8-9 5 5 4-4 5 6v3H3z" fill="#21222c"/></svg>
<div style="position:absolute;left:1016px;top:0;height:84px;line-height:84px;font-size:31.2px;letter-spacing:0.6px;color:#50fa7b;white-space:nowrap;transform:scaleY(1.07);-webkit-text-stroke:0.3px currentColor;letter-spacing:1.3px">vs-code-dracula-theme-vs-code-icons.png</div>
<div style="position:absolute;left:1664px;top:0;height:84px;line-height:84px;font-size:29px;font-weight:bold;color:#46c866">U</div>
<div style="position:absolute;left:1780px;top:25px;width:34px;height:34px"><svg width="34" height="34" viewBox="0 0 34 34" style="position:absolute;left:0;top:0"><g fill="none" stroke="#0288d1" stroke-width="2.3"><ellipse cx="17" cy="17" rx="15.5" ry="6"/><ellipse cx="17" cy="17" rx="15.5" ry="6" transform="rotate(60 17 17)"/><ellipse cx="17" cy="17" rx="15.5" ry="6" transform="rotate(120 17 17)"/></g><circle cx="17" cy="17" r="3.2" fill="#0288d1"/></svg></div>
<div style="position:absolute;left:1832px;top:0;height:84px;line-height:84px;font-size:31.2px;letter-spacing:0.6px;color:#ff5555;white-space:nowrap;transform:scaleY(1.07);-webkit-text-stroke:0.3px currentColor;">layout.tsx</div>
<div style="position:absolute;left:1983px;top:0;height:84px;line-height:84px;font-size:29px;font-weight:bold;color:#e0474c">3</div>
<div style="position:absolute;left:2097px;top:25px;width:34px;height:34px"><svg width="34" height="34" viewBox="0 0 34 34" style="position:absolute;left:0;top:0"><g fill="none" stroke="#0288d1" stroke-width="2.3"><ellipse cx="17" cy="17" rx="15.5" ry="6"/><ellipse cx="17" cy="17" rx="15.5" ry="6" transform="rotate(60 17 17)"/><ellipse cx="17" cy="17" rx="15.5" ry="6" transform="rotate(120 17 17)"/></g><circle cx="17" cy="17" r="3.2" fill="#0288d1"/></svg></div>
<div style="position:absolute;left:2148px;top:0;height:84px;line-height:84px;font-size:31.2px;letter-spacing:0.6px;color:#f8f8f2;white-space:nowrap;transform:scaleY(1.07);-webkit-text-stroke:0.3px currentColor;">page.tsx</div>
<svg style="position:absolute;left:2310px;top:31px" width="24" height="24" viewBox="0 0 24 24"><path d="M2 2l20 20M22 2L2 22" stroke="#f0f0f0" stroke-width="2.4"/></svg>
<svg style="position:absolute;left:2370px;top:20px" width="44" height="44" viewBox="0 0 44 44" fill="none" stroke="#d0d0d0" stroke-width="2.4"><circle cx="26" cy="22" r="9"/><path d="M2 22h15M8 16l-6 6 6 6M35 22h4"/></svg>
<svg style="position:absolute;left:2433px;top:20px" width="44" height="44" viewBox="0 0 44 44" fill="none" stroke="#77787d" stroke-width="2.4"><circle cx="22" cy="22" r="9"/><path d="M2 22h11M31 22h11"/></svg>
<svg style="position:absolute;left:2495px;top:20px" width="44" height="44" viewBox="0 0 44 44" fill="none" stroke="#77787d" stroke-width="2.4"><circle cx="17" cy="22" r="9"/><path d="M3 22h5M26 22h15M35 16l6 6-6 6"/></svg>
<svg style="position:absolute;left:2558px;top:20px" width="44" height="44" viewBox="0 0 44 44" fill="none" stroke="#d0d0d0" stroke-width="2.4"><circle cx="22" cy="22" r="17"/><circle cx="18" cy="13" r="2.6" fill="#d0d0d0"/><circle cx="18" cy="31" r="2.6" fill="#d0d0d0"/><circle cx="27" cy="22" r="2.6" fill="#d0d0d0"/><path d="M18 13v18M18 13l9 9"/></svg>
<svg style="position:absolute;left:2621px;top:20px" width="44" height="44" viewBox="0 0 44 44" fill="none" stroke="#d0d0d0" stroke-width="2.4"><rect x="5" y="5" width="34" height="34" rx="3"/><path d="M22 5v34"/></svg>
<div style="position:absolute;left:2693px;top:40px;width:5px;height:5px;border-radius:50%;background:#d0d0d0"></div>
<div style="position:absolute;left:2705px;top:40px;width:5px;height:5px;border-radius:50%;background:#d0d0d0"></div>
<div style="position:absolute;left:2717px;top:40px;width:5px;height:5px;border-radius:50%;background:#d0d0d0"></div>
</div>
<div style="position:absolute;left:692px;top:168px;width:2756px;height:53px;background:#282a36"></div>
<div style="position:absolute;left:729px;top:168px;height:53px;line-height:50px;font-size:31.2px;letter-spacing:0.9px;color:#6272a4;white-space:nowrap;transform:scaleY(1.07);-webkit-text-stroke:0.3px #6272a4">app</div>
<svg style="position:absolute;left:797px;top:181px" width="16" height="26" viewBox="0 0 16 26"><path d="M2 2l11 11L2 24" fill="none" stroke="#6272a4" stroke-width="2.2"/></svg>
<div style="position:absolute;left:822px;top:168px;height:53px;line-height:50px;font-size:31.2px;letter-spacing:0.9px;color:#6272a4;white-space:nowrap;transform:scaleY(1.07);-webkit-text-stroke:0.3px #6272a4">blog</div>
<svg style="position:absolute;left:898px;top:181px" width="16" height="26" viewBox="0 0 16 26"><path d="M2 2l11 11L2 24" fill="none" stroke="#6272a4" stroke-width="2.2"/></svg>
<div style="position:absolute;left:928px;top:177px;width:34px;height:34px"><svg width="34" height="34" viewBox="0 0 34 34" style="position:absolute;left:0;top:0"><g fill="none" stroke="#0288d1" stroke-width="2.3"><ellipse cx="17" cy="17" rx="15.5" ry="6"/><ellipse cx="17" cy="17" rx="15.5" ry="6" transform="rotate(60 17 17)"/><ellipse cx="17" cy="17" rx="15.5" ry="6" transform="rotate(120 17 17)"/></g><circle cx="17" cy="17" r="3.2" fill="#0288d1"/></svg></div>
<div style="position:absolute;left:978px;top:168px;height:53px;line-height:50px;font-size:31.2px;letter-spacing:0.9px;color:#6272a4;white-space:nowrap;transform:scaleY(1.07);-webkit-text-stroke:0.3px #6272a4">page.tsx</div>
<svg style="position:absolute;left:1115px;top:181px" width="16" height="26" viewBox="0 0 16 26"><path d="M2 2l11 11L2 24" fill="none" stroke="#6272a4" stroke-width="2.2"/></svg>
<div style="position:absolute;left:1141px;top:168px;height:53px;line-height:50px;font-size:31.2px;letter-spacing:0.9px;color:#6272a4;white-space:nowrap;transform:scaleY(1.07);-webkit-text-stroke:0.3px #6272a4">...</div>
<div id="ed" style="position:absolute;left:692px;top:221px;width:2756px;height:1730px;background:#282a36;overflow:hidden">
<div style="position:absolute;left:166.0px;top:214.5px;width:37.4px;height:48px;background:#373937"></div>
<div style="position:absolute;left:166.0px;top:262.5px;width:37.4px;height:48px;background:#373937"></div>
<div style="position:absolute;left:166.0px;top:310.5px;width:37.4px;height:48px;background:#373937"></div>
<div style="position:absolute;left:166.0px;top:358.5px;width:37.4px;height:48px;background:#373937"></div>
<div style="position:absolute;left:203.4px;top:358.5px;width:37.4px;height:48px;background:#2e393b"></div>
<div style="position:absolute;left:203.4px;top:358.5px;width:2px;height:48px;background:#44464c"></div>
<div style="position:absolute;left:166.0px;top:406.5px;width:37.4px;height:48px;background:#373937"></div>
<div style="position:absolute;left:203.4px;top:406.5px;width:37.4px;height:48px;background:#2e393b"></div>
<div style="position:absolute;left:203.4px;top:406.5px;width:2px;height:48px;background:#44464c"></div>
<div style="position:absolute;left:166.0px;top:454.5px;width:37.4px;height:48px;background:#373937"></div>
<div style="position:absolute;left:166.0px;top:502.5px;width:37.4px;height:48px;background:#373937"></div>
<div style="position:absolute;left:166.0px;top:550.5px;width:37.4px;height:48px;background:#373937"></div>
<div style="position:absolute;left:203.4px;top:550.5px;width:37.4px;height:48px;background:#2e393b"></div>
<div style="position:absolute;left:203.4px;top:550.5px;width:2px;height:48px;background:#44464c"></div>
<div style="position:absolute;left:166.0px;top:598.5px;width:37.4px;height:48px;background:#373937"></div>
<div style="position:absolute;left:203.4px;top:598.5px;width:37.4px;height:48px;background:#2e393b"></div>
<div style="position:absolute;left:203.4px;top:598.5px;width:2px;height:48px;background:#44464c"></div>
<div style="position:absolute;left:166.0px;top:646.5px;width:37.4px;height:48px;background:#373937"></div>
<div style="position:absolute;left:166.0px;top:742.5px;width:37.4px;height:48px;background:#373937"></div>
<div style="position:absolute;left:166.0px;top:790.5px;width:37.4px;height:48px;background:#373937"></div>
<div style="position:absolute;left:203.4px;top:790.5px;width:37.4px;height:48px;background:#2e393b"></div>
<div style="position:absolute;left:203.4px;top:790.5px;width:2px;height:48px;background:#44464c"></div>
<div style="position:absolute;left:166.0px;top:838.5px;width:37.4px;height:48px;background:#373937"></div>
<div style="position:absolute;left:203.4px;top:838.5px;width:37.4px;height:48px;background:#2e393b"></div>
<div style="position:absolute;left:203.4px;top:838.5px;width:2px;height:48px;background:#44464c"></div>
<div style="position:absolute;left:240.9px;top:838.5px;width:37.4px;height:48px;background:#373044"></div>
<div style="position:absolute;left:240.9px;top:838.5px;width:2px;height:48px;background:#44464c"></div>
<div style="position:absolute;left:166.0px;top:886.5px;width:37.4px;height:48px;background:#373937"></div>
<div style="position:absolute;left:203.4px;top:886.5px;width:37.4px;height:48px;background:#2e393b"></div>
<div style="position:absolute;left:203.4px;top:886.5px;width:2px;height:48px;background:#44464c"></div>
<div style="position:absolute;left:240.9px;top:886.5px;width:37.4px;height:48px;background:#373044"></div>
<div style="position:absolute;left:240.9px;top:886.5px;width:2px;height:48px;background:#44464c"></div>
<div style="position:absolute;left:278.3px;top:886.5px;width:37.4px;height:48px;background:#29313b"></div>
<div style="position:absolute;left:278.3px;top:886.5px;width:2px;height:48px;background:#44464c"></div>
<div style="position:absolute;left:166.0px;top:934.5px;width:37.4px;height:48px;background:#373937"></div>
<div style="position:absolute;left:203.4px;top:934.5px;width:37.4px;height:48px;background:#2e393b"></div>
<div style="position:absolute;left:203.4px;top:934.5px;width:2px;height:48px;background:#44464c"></div>
<div style="position:absolute;left:240.9px;top:934.5px;width:37.4px;height:48px;background:#373044"></div>
<div style="position:absolute;left:240.9px;top:934.5px;width:2px;height:48px;background:#44464c"></div>
<div style="position:absolute;left:278.3px;top:934.5px;width:37.4px;height:48px;background:#29313b"></div>
<div style="position:absolute;left:278.3px;top:934.5px;width:2px;height:48px;background:#44464c"></div>
<div style="position:absolute;left:166.0px;top:982.5px;width:37.4px;height:48px;background:#373937"></div>
<div style="position:absolute;left:203.4px;top:982.5px;width:37.4px;height:48px;background:#2e393b"></div>
<div style="position:absolute;left:203.4px;top:982.5px;width:2px;height:48px;background:#44464c"></div>
<div style="position:absolute;left:240.9px;top:982.5px;width:37.4px;height:48px;background:#373044"></div>
<div style="position:absolute;left:240.9px;top:982.5px;width:2px;height:48px;background:#44464c"></div>
<div style="position:absolute;left:278.3px;top:982.5px;width:37.4px;height:48px;background:#29313b"></div>
<div style="position:absolute;left:278.3px;top:982.5px;width:2px;height:48px;background:#44464c"></div>
<div style="position:absolute;left:315.8px;top:982.5px;width:37.4px;height:48px;background:#373937"></div>
<div style="position:absolute;left:315.8px;top:982.5px;width:2px;height:48px;background:#44464c"></div>
<div style="position:absolute;left:166.0px;top:1030.5px;width:37.4px;height:48px;background:#373937"></div>
<div style="position:absolute;left:203.4px;top:1030.5px;width:37.4px;height:48px;background:#2e393b"></div>
<div style="position:absolute;left:203.4px;top:1030.5px;width:2px;height:48px;background:#44464c"></div>
<div style="position:absolute;left:240.9px;top:1030.5px;width:37.4px;height:48px;background:#373044"></div>
<div style="position:absolute;left:240.9px;top:1030.5px;width:2px;height:48px;background:#44464c"></div>
<div style="position:absolute;left:278.3px;top:1030.5px;width:37.4px;height:48px;background:#29313b"></div>
<div style="position:absolute;left:278.3px;top:1030.5px;width:2px;height:48px;background:#44464c"></div>
<div style="position:absolute;left:315.8px;top:1030.5px;width:37.4px;height:48px;background:#373937"></div>
<div style="position:absolute;left:315.8px;top:1030.5px;width:2px;height:48px;background:#44464c"></div>
<div style="position:absolute;left:166.0px;top:1078.5px;width:37.4px;height:48px;background:#373937"></div>
<div style="position:absolute;left:203.4px;top:1078.5px;width:37.4px;height:48px;background:#2e393b"></div>
<div style="position:absolute;left:203.4px;top:1078.5px;width:2px;height:48px;background:#44464c"></div>
<div style="position:absolute;left:240.9px;top:1078.5px;width:37.4px;height:48px;background:#373044"></div>
<div style="position:absolute;left:240.9px;top:1078.5px;width:2px;height:48px;background:#44464c"></div>
<div style="position:absolute;left:278.3px;top:1078.5px;width:37.4px;height:48px;background:#29313b"></div>
<div style="position:absolute;left:278.3px;top:1078.5px;width:2px;height:48px;background:#44464c"></div>
<div style="position:absolute;left:315.8px;top:1078.5px;width:37.4px;height:48px;background:#373937"></div>
<div style="position:absolute;left:315.8px;top:1078.5px;width:2px;height:48px;background:#44464c"></div>
<div style="position:absolute;left:166.0px;top:1126.5px;width:37.4px;height:48px;background:#373937"></div>
<div style="position:absolute;left:203.4px;top:1126.5px;width:37.4px;height:48px;background:#2e393b"></div>
<div style="position:absolute;left:203.4px;top:1126.5px;width:2px;height:48px;background:#44464c"></div>
<div style="position:absolute;left:240.9px;top:1126.5px;width:37.4px;height:48px;background:#373044"></div>
<div style="position:absolute;left:240.9px;top:1126.5px;width:2px;height:48px;background:#44464c"></div>
<div style="position:absolute;left:278.3px;top:1126.5px;width:37.4px;height:48px;background:#29313b"></div>
<div style="position:absolute;left:278.3px;top:1126.5px;width:2px;height:48px;background:#44464c"></div>
<div style="position:absolute;left:315.8px;top:1126.5px;width:37.4px;height:48px;background:#373937"></div>
<div style="position:absolute;left:315.8px;top:1126.5px;width:2px;height:48px;background:#44464c"></div>
<div style="position:absolute;left:166.0px;top:1174.5px;width:37.4px;height:48px;background:#373937"></div>
<div style="position:absolute;left:203.4px;top:1174.5px;width:37.4px;height:48px;background:#2e393b"></div>
<div style="position:absolute;left:203.4px;top:1174.5px;width:2px;height:48px;background:#44464c"></div>
<div style="position:absolute;left:240.9px;top:1174.5px;width:37.4px;height:48px;background:#373044"></div>
<div style="position:absolute;left:240.9px;top:1174.5px;width:2px;height:48px;background:#44464c"></div>
<div style="position:absolute;left:278.3px;top:1174.5px;width:37.4px;height:48px;background:#29313b"></div>
<div style="position:absolute;left:278.3px;top:1174.5px;width:2px;height:48px;background:#44464c"></div>
<div style="position:absolute;left:166.0px;top:1222.5px;width:37.4px;height:48px;background:#373937"></div>
<div style="position:absolute;left:203.4px;top:1222.5px;width:37.4px;height:48px;background:#2e393b"></div>
<div style="position:absolute;left:203.4px;top:1222.5px;width:2px;height:48px;background:#44464c"></div>
<div style="position:absolute;left:240.9px;top:1222.5px;width:37.4px;height:48px;background:#373044"></div>
<div style="position:absolute;left:240.9px;top:1222.5px;width:2px;height:48px;background:#44464c"></div>
<div style="position:absolute;left:166.0px;top:1270.5px;width:37.4px;height:48px;background:#373937"></div>
<div style="position:absolute;left:203.4px;top:1270.5px;width:37.4px;height:48px;background:#2e393b"></div>
<div style="position:absolute;left:203.4px;top:1270.5px;width:2px;height:48px;background:#44464c"></div>
<div style="position:absolute;left:166.0px;top:1318.5px;width:37.4px;height:48px;background:#373937"></div>
<div style="position:absolute;left:166.0px;top:214.5px;width:2px;height:1152.0px;background:#4a4c52"></div>
<div style="position:absolute;left:0;width:102px;text-align:right;top:-25.5px;height:48px;line-height:48px;font-family:'Liberation Mono',monospace;font-size:31.2px;color:#6272a4;transform-origin:0 32.3px;transform:translateY(3.9px) scaleY(1.15);-webkit-text-stroke:0.5px currentColor">7</div>
<div style="position:absolute;left:166.0px;top:-25.5px;height:48px;line-height:48px;font-family:'Liberation Mono',monospace;font-size:31.2px;white-space:pre;color:#f8f8f2;transform-origin:0 32.3px;transform:translateY(3.9px) scaleY(1.15);-webkit-text-stroke:0.5px currentColor"><span style="color:#ff79c6">const </span><span style="color:#bd93f9">POSTS_PER_PAGE</span><span style="color:#ff79c6"> = </span><span style="color:#bd93f9">5</span></div>
<div style="position:absolute;left:0;width:102px;text-align:right;top:22.5px;height:48px;line-height:48px;font-family:'Liberation Mono',monospace;font-size:31.2px;color:#6272a4;transform-origin:0 32.3px;transform:translateY(3.9px) scaleY(1.15);-webkit-text-stroke:0.5px currentColor">8</div>
<div style="position:absolute;left:166.0px;top:22.5px;height:48px;line-height:48px;font-family:'Liberation Mono',monospace;font-size:31.2px;white-space:pre;color:#f8f8f2;transform-origin:0 32.3px;transform:translateY(3.9px) scaleY(1.15);-webkit-text-stroke:0.5px currentColor"></div>
<div style="position:absolute;left:0;width:102px;text-align:right;top:70.5px;height:48px;line-height:48px;font-family:'Liberation Mono',monospace;font-size:31.2px;color:#6272a4;transform-origin:0 32.3px;transform:translateY(3.9px) scaleY(1.15);-webkit-text-stroke:0.5px currentColor">9</div>
<div style="position:absolute;left:166.0px;top:70.5px;height:48px;line-height:48px;font-family:'Liberation Mono',monospace;font-size:31.2px;white-space:pre;color:#f8f8f2;transform-origin:0 32.3px;transform:translateY(3.9px) scaleY(1.15);-webkit-text-stroke:0.5px currentColor"><span style="color:#ff79c6">export const </span><span style="color:#bd93f9">metadata</span><span style="color:#ff79c6"> = </span><span style="color:#50fa7b">genPageMetadata</span><span style="color:#f8f8f2">(</span><span style="color:#ff79c6">{</span><span style="color:#f8f8f2"> title</span><span style="color:#ff79c6">:</span><span style="color:#f8f8f2"> </span><span style="color:#f1fa8c">&#x27;Blog&#x27;</span><span style="color:#f8f8f2"> </span><span style="color:#ff79c6">}</span><span style="color:#f8f8f2">)</span></div>
<div style="position:absolute;left:0;width:102px;text-align:right;top:118.5px;height:48px;line-height:48px;font-family:'Liberation Mono',monospace;font-size:31.2px;color:#6272a4;transform-origin:0 32.3px;transform:translateY(3.9px) scaleY(1.15);-webkit-text-stroke:0.5px currentColor">10</div>
<div style="position:absolute;left:166.0px;top:118.5px;height:48px;line-height:48px;font-family:'Liberation Mono',monospace;font-size:31.2px;white-space:pre;color:#f8f8f2;transform-origin:0 32.3px;transform:translateY(3.9px) scaleY(1.15);-webkit-text-stroke:0.5px currentColor"></div>
<div style="position:absolute;left:0;width:102px;text-align:right;top:166.5px;height:48px;line-height:48px;font-family:'Liberation Mono',monospace;font-size:31.2px;color:#6272a4;transform-origin:0 32.3px;transform:translateY(3.9px) scaleY(1.15);-webkit-text-stroke:0.5px currentColor">11</div>
<div style="position:absolute;left:166.0px;top:166.5px;height:48px;line-height:48px;font-family:'Liberation Mono',monospace;font-size:31.2px;white-space:pre;color:#f8f8f2;transform-origin:0 32.3px;transform:translateY(3.9px) scaleY(1.15);-webkit-text-stroke:0.5px currentColor"><span style="color:#ff79c6">export default function </span><span style="color:#50fa7b">BlogPage</span><span style="color:#f8f8f2">() {</span></div>
<div style="position:absolute;left:0;width:102px;text-align:right;top:214.5px;height:48px;line-height:48px;font-family:'Liberation Mono',monospace;font-size:31.2px;color:#6272a4;transform-origin:0 32.3px;transform:translateY(3.9px) scaleY(1.15);-webkit-text-stroke:0.5px currentColor">12</div>
<div style="position:absolute;left:203.4px;top:214.5px;height:48px;line-height:48px;font-family:'Liberation Mono',monospace;font-size:31.2px;white-space:pre;color:#f8f8f2;transform-origin:0 32.3px;transform:translateY(3.9px) scaleY(1.15);-webkit-text-stroke:0.5px currentColor"><span style="color:#ff79c6">const </span><span style="color:#bd93f9">posts</span><span style="color:#ff79c6"> = </span><span style="color:#50fa7b">allCoreContent</span><span style="color:#ff79c6">(</span><span style="color:#50fa7b">sortPosts</span><span style="color:#8be9fd">(</span><span style="color:#bd93f9">allBlogs</span><span style="color:#8be9fd">)</span><span style="color:#ff79c6">)</span></div>
<div style="position:absolute;left:0;width:102px;text-align:right;top:262.5px;height:48px;line-height:48px;font-family:'Liberation Mono',monospace;font-size:31.2px;color:#6272a4;transform-origin:0 32.3px;transform:translateY(3.9px) scaleY(1.15);-webkit-text-stroke:0.5px currentColor">13</div>
<div style="position:absolute;left:203.4px;top:262.5px;height:48px;line-height:48px;font-family:'Liberation Mono',monospace;font-size:31.2px;white-space:pre;color:#f8f8f2;transform-origin:0 32.3px;transform:translateY(3.9px) scaleY(1.15);-webkit-text-stroke:0.5px currentColor"><span style="color:#ff79c6">const </span><span style="color:#bd93f9">pageNumber</span><span style="color:#ff79c6"> = </span><span style="color:#bd93f9">1</span></div>
<div style="position:absolute;left:0;width:102px;text-align:right;top:310.5px;height:48px;line-height:48px;font-family:'Liberation Mono',monospace;font-size:31.2px;color:#6272a4;transform-origin:0 32.3px;transform:translateY(3.9px) scaleY(1.15);-webkit-text-stroke:0.5px currentColor">14</div>
<div style="position:absolute;left:203.4px;top:310.5px;height:48px;line-height:48px;font-family:'Liberation Mono',monospace;font-size:31.2px;white-space:pre;color:#f8f8f2;transform-origin:0 32.3px;transform:translateY(3.9px) scaleY(1.15);-webkit-text-stroke:0.5px currentColor"><span style="color:#ff79c6">const </span><span style="color:#bd93f9">initialDisplayPosts</span><span style="color:#ff79c6"> = </span><span style="color:#bd93f9">posts</span><span style="color:#f8f8f2">.</span><span style="color:#50fa7b">slice</span><span style="color:#ff79c6">(</span></div>
<div style="position:absolute;left:0;width:102px;text-align:right;top:358.5px;height:48px;line-height:48px;font-family:'Liberation Mono',monospace;font-size:31.2px;color:#6272a4;transform-origin:0 32.3px;transform:translateY(3.9px) scaleY(1.15);-webkit-text-stroke:0.5px currentColor">15</div>
<div style="position:absolute;left:240.9px;top:358.5px;height:48px;line-height:48px;font-family:'Liberation Mono',monospace;font-size:31.2px;white-space:pre;color:#f8f8f2;transform-origin:0 32.3px;transform:translateY(3.9px) scaleY(1.15);-webkit-text-stroke:0.5px currentColor"><span style="color:#bd93f9">POSTS_PER_PAGE</span><span style="color:#ff79c6"> <span style="display:inline-block;width:18.72px;text-align:center;transform:translateY(5px) scale(1.35)">*</span> </span><span style="color:#8be9fd">(</span><span style="color:#bd93f9">pageNumber</span><span style="color:#ff79c6"> - </span><span style="color:#bd93f9">1</span><span style="color:#8be9fd">)</span><span style="color:#f8f8f2">,</span></div>
<div style="position:absolute;left:0;width:102px;text-align:right;top:406.5px;height:48px;line-height:48px;font-family:'Liberation Mono',monospace;font-size:31.2px;color:#6272a4;transform-origin:0 32.3px;transform:translateY(3.9px) scaleY(1.15);-webkit-text-stroke:0.5px currentColor">16</div>
<div style="position:absolute;left:240.9px;top:406.5px;height:48px;line-height:48px;font-family:'Liberation Mono',monospace;font-size:31.2px;white-space:pre;color:#f8f8f2;transform-origin:0 32.3px;transform:translateY(3.9px) scaleY(1.15);-webkit-text-stroke:0.5px currentColor"><span style="color:#bd93f9">POSTS_PER_PAGE</span><span style="color:#ff79c6"> <span style="display:inline-block;width:18.72px;text-align:center;transform:translateY(5px) scale(1.35)">*</span> </span><span style="color:#bd93f9">pageNumber</span></div>
<div style="position:absolute;left:0;width:102px;text-align:right;top:454.5px;height:48px;line-height:48px;font-family:'Liberation Mono',monospace;font-size:31.2px;color:#6272a4;transform-origin:0 32.3px;transform:translateY(3.9px) scaleY(1.15);-webkit-text-stroke:0.5px currentColor">17</div>
<div style="position:absolute;left:203.4px;top:454.5px;height:48px;line-height:48px;font-family:'Liberation Mono',monospace;font-size:31.2px;white-space:pre;color:#f8f8f2;transform-origin:0 32.3px;transform:translateY(3.9px) scaleY(1.15);-webkit-text-stroke:0.5px currentColor"><span style="color:#ff79c6">)</span></div>
<div style="position:absolute;left:0;width:102px;text-align:right;top:502.5px;height:48px;line-height:48px;font-family:'Liberation Mono',monospace;font-size:31.2px;color:#6272a4;transform-origin:0 32.3px;transform:translateY(3.9px) scaleY(1.15);-webkit-text-stroke:0.5px currentColor">18</div>
<div style="position:absolute;left:203.4px;top:502.5px;height:48px;line-height:48px;font-family:'Liberation Mono',monospace;font-size:31.2px;white-space:pre;color:#f8f8f2;transform-origin:0 32.3px;transform:translateY(3.9px) scaleY(1.15);-webkit-text-stroke:0.5px currentColor"><span style="color:#ff79c6">const </span><span style="color:#bd93f9">pagination</span><span style="color:#ff79c6"> = </span><span style="color:#ff79c6">{</span></div>
<div style="position:absolute;left:0;width:102px;text-align:right;top:550.5px;height:48px;line-height:48px;font-family:'Liberation Mono',monospace;font-size:31.2px;color:#6272a4;transform-origin:0 32.3px;transform:translateY(3.9px) scaleY(1.15);-webkit-text-stroke:0.5px currentColor">19</div>
<div style="position:absolute;left:240.9px;top:550.5px;height:48px;line-height:48px;font-family:'Liberation Mono',monospace;font-size:31.2px;white-space:pre;color:#f8f8f2;transform-origin:0 32.3px;transform:translateY(3.9px) scaleY(1.15);-webkit-text-stroke:0.5px currentColor"><span style="color:#f8f8f2">currentPage</span><span style="color:#ff79c6">:</span><span style="color:#f8f8f2"> </span><span style="color:#bd93f9">pageNumber</span><span style="color:#f8f8f2">,</span></div>
<div style="position:absolute;left:0;width:102px;text-align:right;top:598.5px;height:48px;line-height:48px;font-family:'Liberation Mono',monospace;font-size:31.2px;color:#6272a4;transform-origin:0 32.3px;transform:translateY(3.9px) scaleY(1.15);-webkit-text-stroke:0.5px currentColor">20</div>
<div style="position:absolute;left:240.9px;top:598.5px;height:48px;line-height:48px;font-family:'Liberation Mono',monospace;font-size:31.2px;white-space:pre;color:#f8f8f2;transform-origin:0 32.3px;transform:translateY(3.9px) scaleY(1.15);-webkit-text-stroke:0.5px currentColor"><span style="color:#f8f8f2">totalPages</span><span style="color:#ff79c6">:</span><span style="color:#f8f8f2"> </span><span style="color:#bd93f9">Math</span><span style="color:#f8f8f2">.</span><span style="color:#50fa7b">ceil</span><span style="color:#8be9fd">(</span><span style="color:#bd93f9">posts</span><span style="color:#f8f8f2">.</span><span style="color:#f8f8f2">length</span><span style="color:#ff79c6"> / </span><span style="color:#bd93f9">POSTS_PER_PAGE</span><span style="color:#8be9fd">)</span><span style="color:#f8f8f2">,</span></div>
<div style="position:absolute;left:0;width:102px;text-align:right;top:646.5px;height:48px;line-height:48px;font-family:'Liberation Mono',monospace;font-size:31.2px;color:#6272a4;transform-origin:0 32.3px;transform:translateY(3.9px) scaleY(1.15);-webkit-text-stroke:0.5px currentColor">21</div>
<div style="position:absolute;left:203.4px;top:646.5px;height:48px;line-height:48px;font-family:'Liberation Mono',monospace;font-size:31.2px;white-space:pre;color:#f8f8f2;transform-origin:0 32.3px;transform:translateY(3.9px) scaleY(1.15);-webkit-text-stroke:0.5px currentColor"><span style="color:#ff79c6">}</span></div>
<div style="position:absolute;left:0;width:102px;text-align:right;top:694.5px;height:48px;line-height:48px;font-family:'Liberation Mono',monospace;font-size:31.2px;color:#6272a4;transform-origin:0 32.3px;transform:translateY(3.9px) scaleY(1.15);-webkit-text-stroke:0.5px currentColor">22</div>
<div style="position:absolute;left:166.0px;top:694.5px;height:48px;line-height:48px;font-family:'Liberation Mono',monospace;font-size:31.2px;white-space:pre;color:#f8f8f2;transform-origin:0 32.3px;transform:translateY(3.9px) scaleY(1.15);-webkit-text-stroke:0.5px currentColor"></div>
<div style="position:absolute;left:0;width:102px;text-align:right;top:742.5px;height:48px;line-height:48px;font-family:'Liberation Mono',monospace;font-size:31.2px;color:#6272a4;transform-origin:0 32.3px;transform:translateY(3.9px) scaleY(1.15);-webkit-text-stroke:0.5px currentColor">23</div>
<div style="position:absolute;left:203.4px;top:742.5px;height:48px;line-height:48px;font-family:'Liberation Mono',monospace;font-size:31.2px;white-space:pre;color:#f8f8f2;transform-origin:0 32.3px;transform:translateY(3.9px) scaleY(1.15);-webkit-text-stroke:0.5px currentColor"><span style="color:#ff79c6">return </span><span style="color:#ff79c6">(</span></div>
<div style="position:absolute;left:0;width:102px;text-align:right;top:790.5px;height:48px;line-height:48px;font-family:'Liberation Mono',monospace;font-size:31.2px;color:#6272a4;transform-origin:0 32.3px;transform:translateY(3.9px) scaleY(1.15);-webkit-text-stroke:0.5px currentColor">24</div>
<div style="position:absolute;left:240.9px;top:790.5px;height:48px;line-height:48px;font-family:'Liberation Mono',monospace;font-size:31.2px;white-space:pre;color:#f8f8f2;transform-origin:0 32.3px;transform:translateY(3.9px) scaleY(1.15);-webkit-text-stroke:0.5px currentColor"><span style="color:#f8f8f2">&lt;&gt;</span></div>
<div style="position:absolute;left:0;width:102px;text-align:right;top:838.5px;height:48px;line-height:48px;font-family:'Liberation Mono',monospace;font-size:31.2px;color:#6272a4;transform-origin:0 32.3px;transform:translateY(3.9px) scaleY(1.15);-webkit-text-stroke:0.5px currentColor">25</div>
<div style="position:absolute;left:278.3px;top:838.5px;height:48px;line-height:48px;font-family:'Liberation Mono',monospace;font-size:31.2px;white-space:pre;color:#f8f8f2;transform-origin:0 32.3px;transform:translateY(3.9px) scaleY(1.15);-webkit-text-stroke:0.5px currentColor"><span style="color:#f8f8f2">&lt;</span><span style="color:#ff79c6">div</span><span style="color:#f8f8f2"> </span><span style="color:#50fa7b;font-style:italic">className</span><span style="color:#ff79c6">=</span><span style="color:#f1fa8c">&quot;divide-y </span><span style="display:inline-block;width:40px;height:48px;vertical-align:top;position:relative"><span style="position:absolute;left:8px;top:10.2px;width:25px;height:20.9px;background:#e5e7eb;box-sizing:border-box;border:1px solid #cfd0d0"></span></span><span style="color:#f1fa8c">divide-gray-200 </span><span style="display:inline-block;width:40px;height:48px;vertical-align:top;position:relative"><span style="position:absolute;left:7px;top:10.2px;width:26px;height:21px;background:#374151;box-sizing:border-box;border:3px solid #f0f0f0;border-top-width:2.6px;border-bottom-width:2.6px"></span></span><span style="color:#f1fa8c">dark:divide-gray-700&quot;</span><span style="color:#f8f8f2">&gt;</span></div>
<div style="position:absolute;left:0;width:102px;text-align:right;top:886.5px;height:48px;line-height:48px;font-family:'Liberation Mono',monospace;font-size:31.2px;color:#6272a4;transform-origin:0 32.3px;transform:translateY(3.9px) scaleY(1.15);-webkit-text-stroke:0.5px currentColor">26</div>
<div style="position:absolute;left:315.8px;top:886.5px;height:48px;line-height:48px;font-family:'Liberation Mono',monospace;font-size:31.2px;white-space:pre;color:#f8f8f2;transform-origin:0 32.3px;transform:translateY(3.9px) scaleY(1.15);-webkit-text-stroke:0.5px currentColor"><span style="color:#f8f8f2">&lt;</span><span style="color:#8be9fd;font-style:italic">PageHeader</span><span style="color:#f8f8f2"> </span><span style="color:#50fa7b;font-style:italic">title</span><span style="color:#ff79c6">=</span><span style="color:#f1fa8c">&quot;Blog&quot;</span><span style="color:#f8f8f2"> /&gt;</span></div>
<div style="position:absolute;left:0;width:102px;text-align:right;top:934.5px;height:48px;line-height:48px;font-family:'Liberation Mono',monospace;font-size:31.2px;color:#6272a4;transform-origin:0 32.3px;transform:translateY(3.9px) scaleY(1.15);-webkit-text-stroke:0.5px currentColor">27</div>
<div style="position:absolute;left:315.8px;top:934.5px;height:48px;line-height:48px;font-family:'Liberation Mono',monospace;font-size:31.2px;white-space:pre;color:#f8f8f2;transform-origin:0 32.3px;transform:translateY(3.9px) scaleY(1.15);-webkit-text-stroke:0.5px currentColor"><span style="color:#f8f8f2">&lt;</span><span style="color:#8be9fd;font-style:italic">ListLayout</span></div>
<div style="position:absolute;left:0;width:102px;text-align:right;top:982.5px;height:48px;line-height:48px;font-family:'Liberation Mono',monospace;font-size:31.2px;color:#6272a4;transform-origin:0 32.3px;transform:translateY(3.9px) scaleY(1.15);-webkit-text-stroke:0.5px currentColor">28</div>
<div style="position:absolute;left:353.2px;top:982.5px;height:48px;line-height:48px;font-family:'Liberation Mono',monospace;font-size:31.2px;white-space:pre;color:#f8f8f2;transform-origin:0 32.3px;transform:translateY(3.9px) scaleY(1.15);-webkit-text-stroke:0.5px currentColor"><span style="color:#50fa7b;font-style:italic">posts</span><span style="color:#ff79c6">=</span><span style="color:#8be9fd">{</span><span style="color:#bd93f9">posts</span><span style="color:#8be9fd">}</span></div>
<div style="position:absolute;left:0;width:102px;text-align:right;top:1030.5px;height:48px;line-height:48px;font-family:'Liberation Mono',monospace;font-size:31.2px;color:#6272a4;transform-origin:0 32.3px;transform:translateY(3.9px) scaleY(1.15);-webkit-text-stroke:0.5px currentColor">29</div>
<div style="position:absolute;left:353.2px;top:1030.5px;height:48px;line-height:48px;font-family:'Liberation Mono',monospace;font-size:31.2px;white-space:pre;color:#f8f8f2;transform-origin:0 32.3px;transform:translateY(3.9px) scaleY(1.15);-webkit-text-stroke:0.5px currentColor"><span style="color:#50fa7b;font-style:italic">initialDisplayPosts</span><span style="color:#ff79c6">=</span><span style="color:#8be9fd">{</span><span style="color:#bd93f9">initialDisplayPosts</span><span style="color:#8be9fd">}</span></div>
<div style="position:absolute;left:0;width:102px;text-align:right;top:1078.5px;height:48px;line-height:48px;font-family:'Liberation Mono',monospace;font-size:31.2px;color:#6272a4;transform-origin:0 32.3px;transform:translateY(3.9px) scaleY(1.15);-webkit-text-stroke:0.5px currentColor">30</div>
<div style="position:absolute;left:353.2px;top:1078.5px;height:48px;line-height:48px;font-family:'Liberation Mono',monospace;font-size:31.2px;white-space:pre;color:#f8f8f2;transform-origin:0 32.3px;transform:translateY(3.9px) scaleY(1.15);-webkit-text-stroke:0.5px currentColor"><span style="color:#50fa7b;font-style:italic">pagination</span><span style="color:#ff79c6">=</span><span style="color:#8be9fd">{</span><span style="color:#bd93f9">pagination</span><span style="color:#8be9fd">}</span></div>
<div style="position:absolute;left:0;width:102px;text-align:right;top:1126.5px;height:48px;line-height:48px;font-family:'Liberation Mono',monospace;font-size:31.2px;color:#6272a4;transform-origin:0 32.3px;transform:translateY(3.9px) scaleY(1.15);-webkit-text-stroke:0.5px currentColor">31</div>
<div style="position:absolute;left:353.2px;top:1126.5px;height:48px;line-height:48px;font-family:'Liberation Mono',monospace;font-size:31.2px;white-space:pre;color:#f8f8f2;transform-origin:0 32.3px;transform:translateY(3.9px) scaleY(1.15);-webkit-text-stroke:0.5px currentColor"><span style="color:#50fa7b;font-style:italic">title</span><span style="color:#ff79c6">=</span><span style="color:#f1fa8c">&quot;All Posts&quot;</span></div>
<div style="position:absolute;left:0;width:102px;text-align:right;top:1174.5px;height:48px;line-height:48px;font-family:'Liberation Mono',monospace;font-size:31.2px;color:#6272a4;transform-origin:0 32.3px;transform:translateY(3.9px) scaleY(1.15);-webkit-text-stroke:0.5px currentColor">32</div>
<div style="position:absolute;left:315.8px;top:1174.5px;height:48px;line-height:48px;font-family:'Liberation Mono',monospace;font-size:31.2px;white-space:pre;color:#f8f8f2;transform-origin:0 32.3px;transform:translateY(3.9px) scaleY(1.15);-webkit-text-stroke:0.5px currentColor"><span style="color:#f8f8f2">/&gt;</span></div>
<div style="position:absolute;left:0;width:102px;text-align:right;top:1222.5px;height:48px;line-height:48px;font-family:'Liberation Mono',monospace;font-size:31.2px;color:#6272a4;transform-origin:0 32.3px;transform:translateY(3.9px) scaleY(1.15);-webkit-text-stroke:0.5px currentColor">33</div>
<div style="position:absolute;left:278.3px;top:1222.5px;height:48px;line-height:48px;font-family:'Liberation Mono',monospace;font-size:31.2px;white-space:pre;color:#f8f8f2;transform-origin:0 32.3px;transform:translateY(3.9px) scaleY(1.15);-webkit-text-stroke:0.5px currentColor"><span style="color:#f8f8f2">&lt;/</span><span style="color:#ff79c6">div</span><span style="color:#f8f8f2">&gt;</span></div>
<div style="position:absolute;left:0;width:102px;text-align:right;top:1270.5px;height:48px;line-height:48px;font-family:'Liberation Mono',monospace;font-size:31.2px;color:#6272a4;transform-origin:0 32.3px;transform:translateY(3.9px) scaleY(1.15);-webkit-text-stroke:0.5px currentColor">34</div>
<div style="position:absolute;left:240.9px;top:1270.5px;height:48px;line-height:48px;font-family:'Liberation Mono',monospace;font-size:31.2px;white-space:pre;color:#f8f8f2;transform-origin:0 32.3px;transform:translateY(3.9px) scaleY(1.15);-webkit-text-stroke:0.5px currentColor"><span style="color:#f8f8f2">&lt;/&gt;</span></div>
<div style="position:absolute;left:0;width:102px;text-align:right;top:1318.5px;height:48px;line-height:48px;font-family:'Liberation Mono',monospace;font-size:31.2px;color:#6272a4;transform-origin:0 32.3px;transform:translateY(3.9px) scaleY(1.15);-webkit-text-stroke:0.5px currentColor">35</div>
<div style="position:absolute;left:203.4px;top:1318.5px;height:48px;line-height:48px;font-family:'Liberation Mono',monospace;font-size:31.2px;white-space:pre;color:#f8f8f2;transform-origin:0 32.3px;transform:translateY(3.9px) scaleY(1.15);-webkit-text-stroke:0.5px currentColor"><span style="color:#ff79c6">)</span></div>
<div style="position:absolute;left:0;width:102px;text-align:right;top:1366.5px;height:48px;line-height:48px;font-family:'Liberation Mono',monospace;font-size:31.2px;color:#6272a4;transform-origin:0 32.3px;transform:translateY(3.9px) scaleY(1.15);-webkit-text-stroke:0.5px currentColor">36</div>
<div style="position:absolute;left:166.0px;top:1366.5px;height:48px;line-height:48px;font-family:'Liberation Mono',monospace;font-size:31.2px;white-space:pre;color:#f8f8f2;transform-origin:0 32.3px;transform:translateY(3.9px) scaleY(1.15);-webkit-text-stroke:0.5px currentColor"><span style="color:#f8f8f2">}</span></div>
<div style="position:absolute;left:0;width:102px;text-align:right;top:1414.5px;height:48px;line-height:48px;font-family:'Liberation Mono',monospace;font-size:31.2px;color:#6272a4;transform-origin:0 32.3px;transform:translateY(3.9px) scaleY(1.15);-webkit-text-stroke:0.5px currentColor">37</div>
<div style="position:absolute;left:166.0px;top:1414.5px;height:48px;line-height:48px;font-family:'Liberation Mono',monospace;font-size:31.2px;white-space:pre;color:#f8f8f2;transform-origin:0 32.3px;transform:translateY(3.9px) scaleY(1.15);-webkit-text-stroke:0.5px currentColor"></div>
<svg style="position:absolute;left:126px;top:183.5px" width="26" height="16" viewBox="0 0 26 16"><path d="M2 2l11 11L24 2" fill="none" stroke="#c8c8c8" stroke-width="2.2"/></svg>
<svg style="position:absolute;left:126px;top:327.5px" width="26" height="16" viewBox="0 0 26 16"><path d="M2 2l11 11L24 2" fill="none" stroke="#c8c8c8" stroke-width="2.2"/></svg>
<svg style="position:absolute;left:126px;top:519.5px" width="26" height="16" viewBox="0 0 26 16"><path d="M2 2l11 11L24 2" fill="none" stroke="#c8c8c8" stroke-width="2.2"/></svg>
<svg style="position:absolute;left:126px;top:759.5px" width="26" height="16" viewBox="0 0 26 16"><path d="M2 2l11 11L24 2" fill="none" stroke="#c8c8c8" stroke-width="2.2"/></svg>
<svg style="position:absolute;left:126px;top:807.5px" width="26" height="16" viewBox="0 0 26 16"><path d="M2 2l11 11L24 2" fill="none" stroke="#c8c8c8" stroke-width="2.2"/></svg>
<svg style="position:absolute;left:126px;top:855.5px" width="26" height="16" viewBox="0 0 26 16"><path d="M2 2l11 11L24 2" fill="none" stroke="#c8c8c8" stroke-width="2.2"/></svg>
<svg style="position:absolute;left:126px;top:999.5px" width="26" height="16" viewBox="0 0 26 16"><path d="M2 2l11 11L24 2" fill="none" stroke="#c8c8c8" stroke-width="2.2"/></svg>
<div style="position:absolute;left:14px;top:420.5px;width:20px;height:20px;border-radius:50%;background:#7f3538"></div>
<div style="position:absolute;left:2726px;top:0;width:1px;height:1730px;background:#1e1f28"></div>
<div style="position:absolute;left:2726px;top:173px;width:30px;height:854px;background:#4a4b55"></div>
<div style="position:absolute;left:2750px;top:42px;width:6px;height:48px;background:#4a9fb0"></div>
<div style="position:absolute;left:0;top:0;width:2756px;height:9px;background:linear-gradient(#18191f 0%,#1e1f27 45%,rgba(40,42,54,0) 100%)"></div>
</div>
<div style="position:absolute;left:0;top:1951px;width:3448px;height:39px;background:#191a21;overflow:hidden">
<div style="position:absolute;left:69px;top:7px;height:40px;line-height:40px;font-size:28.8px;letter-spacing:0.4px;color:#f0f0f0;white-space:nowrap;-webkit-text-stroke:0.3px #f0f0f0">main*</div>
<div style="position:absolute;left:345px;top:7px;height:40px;line-height:40px;font-size:28.8px;letter-spacing:0.4px;color:#f0f0f0;white-space:nowrap;-webkit-text-stroke:0.3px #f0f0f0">1</div>
<div style="position:absolute;left:411px;top:7px;height:40px;line-height:40px;font-size:28.8px;letter-spacing:0.4px;color:#f0f0f0;white-space:nowrap;-webkit-text-stroke:0.3px #f0f0f0">6</div>
<div style="position:absolute;left:479px;top:7px;height:40px;line-height:40px;font-size:28.8px;letter-spacing:0.4px;color:#f0f0f0;white-space:nowrap;-webkit-text-stroke:0.3px #f0f0f0">43</div>
<div style="position:absolute;left:595px;top:7px;height:40px;line-height:40px;font-size:28.8px;letter-spacing:0.4px;color:#f0f0f0;white-space:nowrap;-webkit-text-stroke:0.3px #f0f0f0">0</div>
<div style="position:absolute;left:693px;top:7px;height:40px;line-height:40px;font-size:28.8px;letter-spacing:0.4px;color:#f0f0f0;white-space:nowrap;-webkit-text-stroke:0.3px #f0f0f0">Live Share</div>
<div style="position:absolute;left:873px;top:7px;height:40px;line-height:40px;font-size:28.8px;letter-spacing:0.4px;color:#f0f0f0;white-space:nowrap;-webkit-text-stroke:0.3px #f0f0f0">AWS</div>
<div style="position:absolute;left:1017px;top:7px;height:40px;line-height:40px;font-size:28.8px;letter-spacing:0.4px;color:#f0f0f0;white-space:nowrap;-webkit-text-stroke:0.3px #f0f0f0">CodeWhisperer</div>
<div style="position:absolute;left:1265px;top:7px;height:40px;line-height:40px;font-size:28.8px;letter-spacing:0.4px;color:#f0f0f0;white-space:nowrap;-webkit-text-stroke:0.3px #f0f0f0">Git Graph</div>
<div style="position:absolute;left:1898px;top:7px;height:40px;line-height:40px;font-size:28.8px;letter-spacing:0.4px;color:#f0f0f0;white-space:nowrap;-webkit-text-stroke:0.3px #f0f0f0">You, 2 months ago</div>
<div style="position:absolute;left:2189px;top:7px;height:40px;line-height:40px;font-size:28.8px;letter-spacing:0.4px;color:#f0f0f0;white-space:nowrap;-webkit-text-stroke:0.3px #f0f0f0">Ln 1, Col 1</div>
<div style="position:absolute;left:2373px;top:7px;height:40px;line-height:40px;font-size:28.8px;letter-spacing:0.4px;color:#f0f0f0;white-space:nowrap;-webkit-text-stroke:0.3px #f0f0f0">Spaces: 2</div>
<div style="position:absolute;left:2547px;top:7px;height:40px;line-height:40px;font-size:28.8px;letter-spacing:0.4px;color:#f0f0f0;white-space:nowrap;-webkit-text-stroke:0.3px #f0f0f0">UTF-8</div>
<div style="position:absolute;left:2672px;top:7px;height:40px;line-height:40px;font-size:28.8px;letter-spacing:0.4px;color:#f0f0f0;white-space:nowrap;-webkit-text-stroke:0.3px #f0f0f0">LF</div>
<div style="position:absolute;left:2742px;top:7px;height:40px;line-height:40px;font-size:28.8px;letter-spacing:0.4px;color:#f0f0f0;white-space:nowrap;-webkit-text-stroke:0.3px #f0f0f0">{ }</div>
<div style="position:absolute;left:2788px;top:7px;height:40px;line-height:40px;font-size:28.8px;letter-spacing:0.4px;color:#f0f0f0;white-space:nowrap;-webkit-text-stroke:0.3px #f0f0f0">TypeScript JSX</div>
<div style="position:absolute;left:3070px;top:7px;height:40px;line-height:40px;font-size:28.8px;letter-spacing:0.4px;color:#f0f0f0;white-space:nowrap;-webkit-text-stroke:0.3px #f0f0f0">2 Spell</div>
<div style="position:absolute;left:3243px;top:7px;height:40px;line-height:40px;font-size:28.8px;letter-spacing:0.4px;color:#f0f0f0;white-space:nowrap;-webkit-text-stroke:0.3px #f0f0f0">Prettier</div>
<svg style="position:absolute;left:28px;top:6px" width="40" height="40" viewBox="0 0 40 40" fill="none" stroke="#f0f0f0" stroke-width="2.4"><circle cx="7" cy="6" r="4"/><circle cx="7" cy="34" r="4"/><circle cx="25" cy="14" r="4"/><path d="M7 10v20M25 18c0 8-18 6-18 12"/></svg>
<svg style="position:absolute;left:160px;top:6px" width="40" height="40" viewBox="0 0 40 40" fill="none" stroke="#f0f0f0" stroke-width="2.4"><path d="M5 22a14 14 0 0 1 26-8M33 22a14 14 0 0 1-26 8M31 6v8h-8M7 38v-8h8"/></svg>
<svg style="position:absolute;left:230px;top:6px" width="40" height="40" viewBox="0 0 40 40" fill="none" stroke="#f0f0f0" stroke-width="2.4"><circle cx="6" cy="6" r="4"/><circle cx="6" cy="34" r="4"/><circle cx="22" cy="28" r="4"/><path d="M6 10v20M14 2v36M22 24v-6"/></svg>
<svg style="position:absolute;left:302px;top:6px" width="32" height="40" viewBox="0 0 32 40" fill="none" stroke="#f0f0f0" stroke-width="2.4"><circle cx="15" cy="22" r="13"/><path d="M9 16l12 12M21 16L9 28"/></svg>
<svg style="position:absolute;left:370px;top:6px" width="32" height="40" viewBox="0 0 32 40" fill="none" stroke="#f0f0f0" stroke-width="2.4"><path d="M15 8l14 26H1z"/><path d="M15 17v8M15 28v2"/></svg>
<svg style="position:absolute;left:438px;top:6px" width="32" height="40" viewBox="0 0 32 40" fill="none" stroke="#f0f0f0" stroke-width="2.4"><circle cx="15" cy="22" r="13"/><path d="M15 19v10M15 14v2"/></svg>
<svg style="position:absolute;left:556px;top:6px" width="32" height="40" viewBox="0 0 32 40" fill="none" stroke="#f0f0f0" stroke-width="2.4"><path d="M6 6a16 16 0 0 0 0 20M26 6a16 16 0 0 1 0 20M10 10a10 10 0 0 0 0 12M22 10a10 10 0 0 1 0 12M16 16l-6 22M16 16l6 22M12 30h8"/><circle cx="16" cy="16" r="2"/></svg>
<svg style="position:absolute;left:651px;top:6px" width="40" height="40" viewBox="0 0 40 40" fill="none" stroke="#f0f0f0" stroke-width="2.4"><path d="M4 36c0-12 8-18 20-18v-6l10 10-10 10v-6c-8 0-14 2-16 10"/><circle cx="10" cy="36" r="4"/></svg>
<svg style="position:absolute;left:978px;top:6px" width="32" height="40" viewBox="0 0 32 40" fill="none" stroke="#f0f0f0" stroke-width="2.4"><path d="M4 14l22 22M26 14L4 36"/></svg>
<svg style="position:absolute;left:1862px;top:6px" width="20" height="40" viewBox="0 0 20 40" fill="none" stroke="#f0f0f0" stroke-width="2.4"><circle cx="10" cy="24" r="7"/><path d="M10 2v15"/></svg>
<svg style="position:absolute;left:3026px;top:6px" width="36" height="40" viewBox="0 0 36 40" fill="none" stroke="#f0f0f0" stroke-width="2.4"><path d="M18 8l15 28H3z"/><path d="M18 18v9M18 30v2"/></svg>
<svg style="position:absolute;left:3198px;top:6px" width="40" height="40" viewBox="0 0 40 40" fill="none" stroke="#f0f0f0" stroke-width="2.4"><path d="M2 26l7 8 16-20M18 30l4 4 16-20"/></svg>
<svg style="position:absolute;left:3382px;top:6px" width="40" height="40" viewBox="0 0 40 40" fill="none" stroke="#f0f0f0" stroke-width="2.4"><path d="M8 34V22a12 12 0 0 1 24 0v12l3 4H5z"/></svg>
<div style="position:absolute;left:3403px;top:13px;width:12px;height:12px;border-radius:50%;background:#f0f0f0"></div>
</div>
</body></html>
